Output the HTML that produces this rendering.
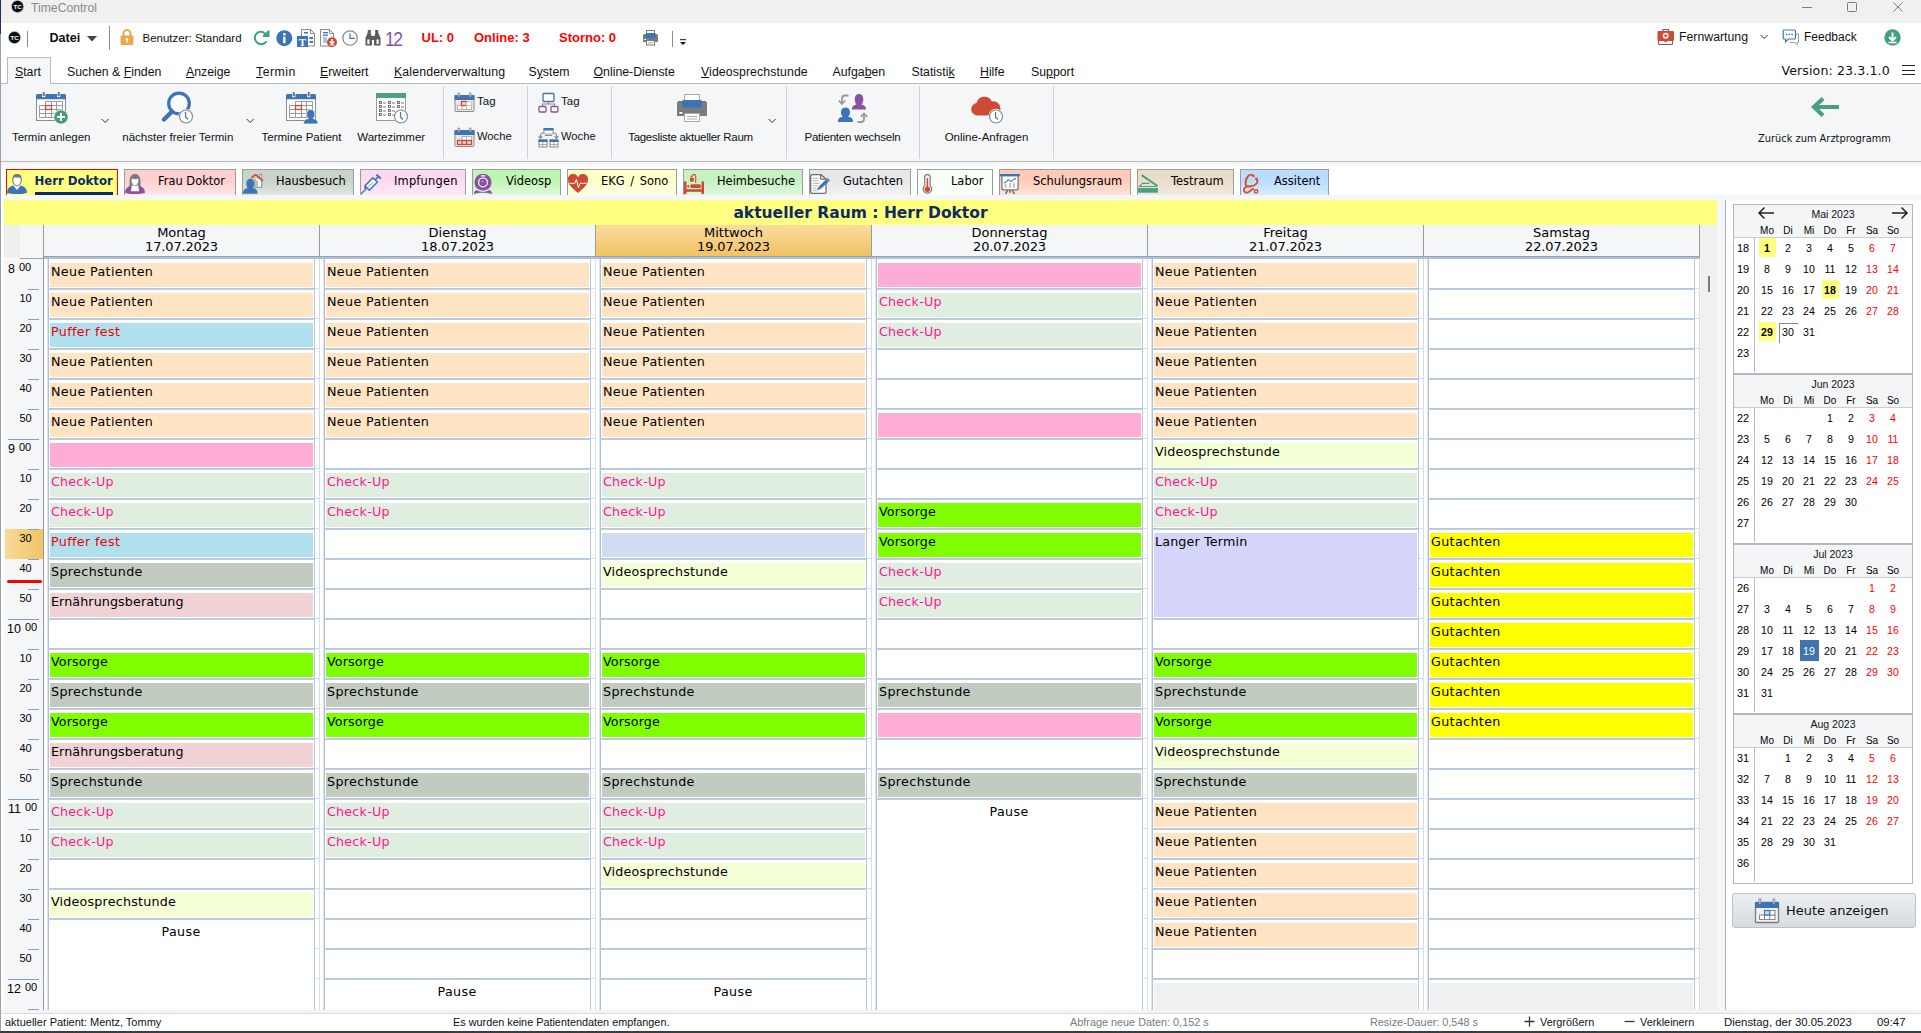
<!DOCTYPE html><html lang="de"><head><meta charset="utf-8"><title>TimeControl</title><style>
*{box-sizing:border-box;margin:0;padding:0}
html,body{width:1921px;height:1033px;overflow:hidden;background:#fff}
body{position:relative;font-family:"Liberation Sans",sans-serif;font-size:12px;color:#111}
.a{position:absolute}
.t{position:absolute;white-space:pre;line-height:1}
.dv{font-family:"DejaVu Sans","Liberation Sans",sans-serif}
.dvc{font-family:"DejaVu Sans Condensed","DejaVu Sans","Liberation Sans",sans-serif}
u{text-decoration:underline;text-underline-offset:1px}
.cell{position:absolute;font-family:"DejaVu Sans","Liberation Sans",sans-serif;font-size:12.7px;letter-spacing:.36px;line-height:15px;padding:1px 0 0 1px;white-space:pre;overflow:hidden;color:#000}
.hl{position:absolute;height:2px;background:linear-gradient(#b3c4da,#c3d0e2)}
.vl{position:absolute;width:1px;background:#b7c7dc}
.dh{position:absolute;top:225px;height:31px;background:#f5f6f8;border-right:1px solid #9a9a9a;font-family:"DejaVu Sans","Liberation Sans",sans-serif;font-size:13px;line-height:14px;text-align:center;padding-top:1px;color:#000}
.mc{position:absolute;font-size:10.6px;line-height:21px;text-align:center;width:21px;height:21px;color:#000}
  .rt{position:absolute;top:169px;height:26px;border:1px solid #9c9c9c;border-bottom:none;font-family:"DejaVu Sans","Liberation Sans",sans-serif;font-size:11.45px;line-height:14px;color:#000}
.rt span{position:absolute;top:4.4px;white-space:pre}
.rb{position:absolute;font-size:11.5px;white-space:pre;line-height:14px;text-align:center;color:#111}
.sep{position:absolute;top:86px;width:1px;height:73px;background:#cfd2d6}
.mi{position:absolute;top:65px;font-size:12.3px;line-height:15px;white-space:pre;color:#111}
</style></head><body>
<div class="a" style="left:0;top:0;width:1921px;height:23px;background:#f0f0f0"></div>
<div class="t" style="left:31px;top:1px;font-size:12.2px;line-height:14px;color:#8a8a8a">TimeControl</div>
<svg class="a" style="left:10.5px;top:0px" width="13" height="13" viewBox="0 0 13 13"><circle cx="6.5" cy="6.5" r="6.5" fill="#b8bcc4"/><circle cx="6.5" cy="6.5" r="5.7" fill="#0b0d14"/><text x="6.5" y="8.7" text-anchor="middle" font-family="Liberation Sans,sans-serif" font-weight="700" font-size="6.2" fill="#fff">TC</text></svg><svg class="a" style="left:1790px;top:0" width="131" height="23" viewBox="0 0 131 23" fill="none" stroke="#7d7d7d" stroke-width="1"><path d="M12 7.5h10"/><rect x="57.5" y="2.5" width="9" height="9" rx="1"/><path d="M103.500 2.500l9 9m0-9l-9 9"/></svg>
<svg class="a" style="left:7.5px;top:31px" width="13" height="13" viewBox="0 0 13 13"><circle cx="6.5" cy="6.5" r="6.5" fill="#b8bcc4"/><circle cx="6.5" cy="6.5" r="5.7" fill="#0b0d14"/><text x="6.5" y="8.7" text-anchor="middle" font-family="Liberation Sans,sans-serif" font-weight="700" font-size="6.2" fill="#fff">TC</text></svg><div class="a" style="left:27px;top:31px;width:1px;height:16px;background:#8c8c8c"></div><div class="t" style="left:49.5px;top:32px;font-size:12.6px;color:#111;font-weight:700;line-height:12px">Datei</div><svg class="a" style="left:87px;top:36px" width="10" height="6" viewBox="0 0 10 6"><path d="M0 0h10l-5 5.5z" fill="#444"/></svg><div class="a" style="left:109px;top:26px;width:1px;height:24px;background:#8c8c8c"></div><svg class="a" style="left:119px;top:28px" width="16" height="18" viewBox="0 0 16 18"><path d="M4.5 8V5.5a3.5 3.5 0 017 0V8" fill="none" stroke="#e9a94d" stroke-width="2"/><rect x="1.5" y="7.5" width="13" height="9.5" rx="1" fill="#e9a94d"/><circle cx="8" cy="11.3" r="1.2" fill="#fff"/><rect x="7.4" y="11.5" width="1.2" height="3" fill="#fff"/></svg><div class="t" style="left:142.5px;top:32px;font-size:11.5px;color:#111;line-height:12px">Benutzer: Standard</div><svg class="a" style="left:253px;top:30px" width="17" height="17" viewBox="0 0 17 17"><path d="M13.6 11.2A6 6 0 112.9 4.3 6 6 0 0112 3.6" fill="none" stroke="#439f7a" stroke-width="2"/><path d="M9.5 5.8l6-.3L15.200 .4z" fill="#439f7a"/><path d="M10 6h5.600V.6" fill="none" stroke="#439f7a" stroke-width="1.8"/></svg><svg class="a" style="left:275.5px;top:30px" width="17" height="17" viewBox="0 0 17 17"><circle cx="8.3" cy="8.2" r="8" fill="#3d74b7"/><circle cx="8.3" cy="4.3" r="1.3" fill="#fff"/><rect x="7.1" y="6.6" width="2.4" height="6.6" fill="#fff"/></svg><svg class="a" style="left:296px;top:28px" width="20" height="20" viewBox="0 0 20 20"><path d="M5.500 1.500h9l4 4v12.500h-13z" fill="#fff" stroke="#8a8a8a"/><path d="M14.500 1.500v4h4" fill="none" stroke="#8a8a8a"/><rect x="8" y="4" width="4" height="1.500" fill="#3d74b7"/><rect x="13.500" y="9" width="3.500" height="2" fill="#3d74b7"/><rect x="13.500" y="13" width="3.500" height="2" fill="#3d74b7"/><rect x="1" y="8" width="11" height="11" fill="#3d74b7"/><text x="6.500" y="17.500" text-anchor="middle" font-family="Liberation Serif,serif" font-weight="700" font-size="11" fill="#fff">T</text></svg><svg class="a" style="left:319px;top:28px" width="20" height="20" viewBox="0 0 20 20"><path d="M1.500 1.500h9l4 4v12.500h-13z" fill="#fff" stroke="#8a8a8a"/><path d="M10.500 1.500v4h4" fill="none" stroke="#8a8a8a"/><rect x="4" y="4" width="5" height="1.300" fill="#3d74b7"/><rect x="4" y="6.500" width="5" height="1.300" fill="#3d74b7"/><rect x="4" y="9" width="4" height="6" fill="#a9c6e6"/><circle cx="13" cy="14.300" r="5" fill="#cf4a34"/><path d="M13 11v4.500M10.800 13.600l2.200 2.200 2.200-2.200" fill="none" stroke="#fff" stroke-width="1.500"/><path d="M10.700 17h4.600" stroke="#fff" stroke-width="1"/></svg><svg class="a" style="left:342px;top:30px" width="16" height="16" viewBox="0 0 16 16"><circle cx="8.0" cy="8.0" r="7.2" fill="#fff" stroke="#8a8a8a" stroke-width="1.300"/><path d="M8.0 3.6V8.3H12.8" fill="none" stroke="#3d74b7" stroke-width="1.200"/></svg><svg class="a" style="left:364px;top:29px" width="18" height="18" viewBox="0 0 18 18"><path d="M1.500 16.500V9l2.500-6h2.500l1.500 6v7.500zM10 16.500V9l1.500-6H14l2.500 6v7.500z" fill="#5c5c5c"/><rect x="7" y="7" width="4" height="4" fill="#5c5c5c"/><rect x="3.800" y="1" width="3" height="2.500" fill="#5c5c5c"/><rect x="11.200" y="1" width="3" height="2.500" fill="#5c5c5c"/><rect x="3.300" y="10.500" width="2.200" height="4.500" fill="#fff"/><rect x="12.500" y="10.500" width="2.200" height="4.500" fill="#fff"/></svg><div class="t" style="left:385px;top:28px;font-size:21px;color:#8a50a8;line-height:21px;letter-spacing:-2px;transform:scaleX(.84);transform-origin:0 0">12</div><div class="t" style="left:421.5px;top:31px;font-size:13px;color:#f00;font-weight:700;line-height:13px">UL: 0</div><div class="t" style="left:474px;top:31px;font-size:13px;color:#f00;font-weight:700;line-height:13px">Online: 3</div><div class="t" style="left:559px;top:31px;font-size:13px;color:#f00;font-weight:700;line-height:13px">Storno: 0</div><svg class="a" style="left:642px;top:29px" width="18" height="18" viewBox="0 0 18 18"><rect x="4.500" y="1.500" width="8" height="4" fill="#fff" stroke="#7b7b7b"/><path d="M1 6.500a1.500 1.500 0 011.500-1.500h12a1.500 1.500 0 011.500 1.500V13H1z" fill="#7b7b7b"/><rect x="3.700" y="4" width="10" height="5" rx="1" fill="#3d74b7"/><rect x="4.500" y="11.500" width="8" height="4.500" fill="#fff" stroke="#7b7b7b"/><path d="M6 13.800h5" stroke="#a9a9a9"/><rect x="2.200" y="10" width="1.800" height="1" fill="#fff"/></svg><div class="a" style="left:672px;top:31px;width:1px;height:16px;background:#8c8c8c"></div><svg class="a" style="left:679px;top:38px" width="8" height="8" viewBox="0 0 8 8"><path d="M1 1.7h6" stroke="#111" stroke-width="1"/><path d="M1 4h6l-3 3z" fill="#111"/></svg><svg class="a" style="left:1656px;top:27px" width="20" height="20" viewBox="0 0 20 20"><path d="M7 4.500V2.500h5.500v2" fill="none" stroke="#666" stroke-width="1.200"/><rect x="2.500" y="12" width="14" height="5.500" rx="1" fill="#fff" stroke="#666" stroke-width="1.100"/><rect x="1.500" y="4" width="16.500" height="10" rx="1.300" fill="#cf4a34"/><circle cx="9.700" cy="8.700" r="3" fill="#fff"/><path d="M9.700 6.900v3.600M7.900 8.700h3.600" stroke="#cf4a34" stroke-width="1.200"/><path d="M8 14l1.700 1.800 1.700-1.800z" fill="#cf4a34"/></svg><div class="t" style="left:1679px;top:31px;font-size:12.3px;color:#111;line-height:12px">Fernwartung</div><svg class="a" style="left:1760px;top:33.5px" width="9" height="6" viewBox="0 0 9 6"><path d="M.7 1l3.5 3.5L7.7 1" fill="none" stroke="#333" stroke-width="1"/></svg><svg class="a" style="left:1782px;top:28px" width="20" height="20" viewBox="0 0 20 20"><path d="M12 6h4.500v8.500h-1.300v2.300l-2.700-2.300H8" fill="#fff" stroke="#9a9a9a" stroke-width="1"/><path d="M2.200 2h10.300a1 1 0 011 1v7a1 1 0 01-1 1H6.500l-3 2.800V11H2.200a1 1 0 01-1-1V3a1 1 0 011-1z" fill="#fff" stroke="#3d74b7" stroke-width="1.200"/><circle cx="4.700" cy="6.300" r=".85" fill="#3d74b7"/><circle cx="7.400" cy="6.300" r=".85" fill="#3d74b7"/><circle cx="10.100" cy="6.300" r=".85" fill="#3d74b7"/></svg><div class="t" style="left:1804px;top:31px;font-size:12px;color:#111;line-height:12px">Feedback</div><svg class="a" style="left:1883.5px;top:28.5px" width="18" height="18" viewBox="0 0 18 18"><circle cx="8.500" cy="8.500" r="8.200" fill="#439f7a"/><path d="M8.500 3.500v7M5 8l3.500 3.500L12 8" fill="none" stroke="#fff" stroke-width="2"/><path d="M4.500 13.500h8" stroke="#fff" stroke-width="1.600"/></svg>
<div class="a" style="left:7px;top:57px;width:44px;height:27px;background:#f5f6f8;border:1px solid #b9babc;border-bottom:none"></div><div class="mi" style="left:15px"><u>S</u>tart</div><div class="mi" style="left:67px">Suchen &amp; <u>F</u>inden</div><div class="mi" style="left:186px"><u>A</u>nzeige</div><div class="mi" style="left:256px"><span style="letter-spacing:.5px"><u>T</u>ermin</span></div><div class="mi" style="left:320px"><u>E</u>rweitert</div><div class="mi" style="left:394px"><span style="letter-spacing:.14px"><u>K</u>alenderverwaltung</span></div><div class="mi" style="left:528.5px">S<u>y</u>stem</div><div class="mi" style="left:593.5px"><u>O</u>nline-Dienste</div><div class="mi" style="left:701px"><span style="letter-spacing:.1px"><u>V</u>ideosprechstunde</span></div><div class="mi" style="left:832.5px">Aufga<u>b</u>en</div><div class="mi" style="left:911.5px">Statisti<u>k</u></div><div class="mi" style="left:980px"><u>H</u>ilfe</div><div class="mi" style="left:1031px">Su<u>p</u>port</div><div class="t dv" style="left:1781.5px;top:64px;font-size:12.6px;letter-spacing:.1px;line-height:14px;color:#111">Version: 23.3.1.0</div><div class="a" style="left:1902px;top:65px;width:13px;height:10px;border-top:1px solid #222;border-bottom:1px solid #222"><div style="margin-top:3.5px;height:1px;background:#222"></div></div>
<div class="a" style="left:1px;top:83px;width:1920px;height:1px;background:#b9babc"></div>
<div class="a" style="left:8px;top:83px;width:42px;height:1px;background:#f5f6f8"></div>
<div class="a" style="left:1px;top:84px;width:1920px;height:77px;background:#f5f6f8"></div>
<div class="a" style="left:1px;top:161px;width:1920px;height:1px;background:#b9babc"></div>
<div class="a" style="left:1px;top:162px;width:1920px;height:3px;background:#f5f6f8"></div>
<div class="sep" style="left:443px"></div><div class="sep" style="left:527px"></div><div class="sep" style="left:611px"></div><div class="sep" style="left:786px"></div><div class="sep" style="left:919px"></div><div class="sep" style="left:1053px"></div><svg class="a" style="left:35px;top:90px" width="36" height="36" viewBox="0 0 36 36"><rect x="1.5" y="5.5" width="29" height="25" fill="#fff" stroke="#8c8c8c"/><path d="M1 9.300V5.500A1.500 1.500 0 012.500 4h27A1.500 1.500 0 0131 5.500v3.800z" fill="#3d74b7"/><rect x="7" y="2" width="3.400" height="5.200" fill="#f5f6f8"/><rect x="22" y="2" width="3.400" height="5.200" fill="#f5f6f8"/><rect x="7.700" y="2" width="2" height="4.200" fill="#777"/><rect x="22.700" y="2" width="2" height="4.200" fill="#777"/><path d="M10.500 11.500h17v16h-23v-12h6zM4.500 19.500h23M4.500 23.500h23M10.500 15.500h17M10.500 11.500v16M16.500 11.500v16M21.500 11.500v16" fill="none" stroke="#9c9c9c"/><rect x="10.500" y="15.500" width="6" height="4" fill="#fbe9e5" stroke="#cf4a34" stroke-width="1.200"/><circle cx="26" cy="27" r="7.500" fill="#f5f6f8"/><circle cx="26" cy="27" r="6.800" fill="#439f7a"/><path d="M26 23v8M22 27h8" stroke="#fff" stroke-width="2"/></svg><div class="rb" style="left:-18.799999999999997px;top:130px;width:140px">Termin anlegen</div><svg class="a" style="left:101px;top:118px" width="9" height="6" viewBox="0 0 9 6"><path d="M.7 1l3.5 3.5L7.7 1" fill="none" stroke="#333" stroke-width="1"/></svg><svg class="a" style="left:160px;top:91px" width="36" height="34" viewBox="0 0 36 34"><circle cx="19" cy="12.500" r="10.300" fill="#fdfdfe" stroke="#3d74b7" stroke-width="3.200"/><path d="M12 20.500L4 28.500" stroke="#3d74b7" stroke-width="4.500" stroke-linecap="round"/><circle cx="26" cy="25.500" r="7.500" fill="#f5f6f8"/><circle cx="26" cy="25.500" r="6.500" fill="#fff" stroke="#8a8a8a" stroke-width="1.200"/><path d="M25.500 21v5l2.500 2.500" fill="none" stroke="#3d74b7" stroke-width="1.200"/></svg><div class="rb" style="left:107.80000000000001px;top:130px;width:140px">nächster freier Termin</div><svg class="a" style="left:246px;top:118px" width="9" height="6" viewBox="0 0 9 6"><path d="M.7 1l3.5 3.5L7.7 1" fill="none" stroke="#333" stroke-width="1"/></svg><svg class="a" style="left:285px;top:90px" width="36" height="36" viewBox="0 0 36 36"><rect x="1.5" y="5.5" width="29" height="25" fill="#fff" stroke="#8c8c8c"/><path d="M1 9.300V5.500A1.500 1.500 0 012.500 4h27A1.500 1.500 0 0131 5.500v3.800z" fill="#3d74b7"/><rect x="7" y="2" width="3.400" height="5.200" fill="#f5f6f8"/><rect x="22" y="2" width="3.400" height="5.200" fill="#f5f6f8"/><rect x="7.700" y="2" width="2" height="4.200" fill="#777"/><rect x="22.700" y="2" width="2" height="4.200" fill="#777"/><path d="M10.500 11.500h17v16h-23v-12h6zM4.500 19.500h23M4.500 23.500h23M10.500 15.500h17M10.500 11.500v16M16.500 11.500v16M21.500 11.500v16" fill="none" stroke="#9c9c9c"/><rect x="10.500" y="15.500" width="6" height="4" fill="#fbe9e5" stroke="#cf4a34" stroke-width="1.200"/><path d="M18.500 34c0-4 2-5 5-5.500-1.500-1-2-2.500-2-4.500 0-2.500 1.500-4.500 4.200-4.500s4.200 2 4.200 4.500c0 2-.5 3.500-2 4.500 3 .5 5 1.500 5 5.500z" fill="#3d74b7" stroke="#f5f6f8" stroke-width=".8"/></svg><div class="rb" style="left:231.5px;top:130px;width:140px">Termine Patient</div><svg class="a" style="left:375px;top:92px" width="34" height="34" viewBox="0 0 34 34"><rect x="1.500" y="1.500" width="29" height="27" fill="#fff" stroke="#9c9c9c"/><rect x="1" y="1" width="30" height="5" fill="#4fa17e"/><rect x="4.5" y="9.5" width="2" height="2" fill="none" stroke="#666" stroke-width=".9"/><path d="M8.0 11.0h3" stroke="#666" stroke-width=".9"/><rect x="13.5" y="9.5" width="2" height="2" fill="none" stroke="#666" stroke-width=".9"/><path d="M17.0 11.0h3" stroke="#666" stroke-width=".9"/><rect x="22.5" y="9.5" width="2" height="2" fill="none" stroke="#666" stroke-width=".9"/><path d="M26.0 11.0h3" stroke="#666" stroke-width=".9"/><rect x="4.5" y="13.5" width="2" height="2" fill="none" stroke="#666" stroke-width=".9"/><path d="M8.0 15.0h3" stroke="#666" stroke-width=".9"/><rect x="13.5" y="13.5" width="2" height="2" fill="none" stroke="#666" stroke-width=".9"/><path d="M17.0 15.0h3" stroke="#666" stroke-width=".9"/><rect x="22.5" y="13.5" width="2" height="2" fill="none" stroke="#666" stroke-width=".9"/><path d="M26.0 15.0h3" stroke="#666" stroke-width=".9"/><rect x="4.5" y="17.5" width="2" height="2" fill="none" stroke="#666" stroke-width=".9"/><path d="M8.0 19.0h3" stroke="#666" stroke-width=".9"/><rect x="13.5" y="17.5" width="2" height="2" fill="none" stroke="#666" stroke-width=".9"/><path d="M17.0 19.0h3" stroke="#666" stroke-width=".9"/><rect x="4.5" y="21.5" width="2" height="2" fill="none" stroke="#666" stroke-width=".9"/><path d="M8.0 23.0h3" stroke="#666" stroke-width=".9"/><rect x="13.5" y="21.5" width="2" height="2" fill="none" stroke="#666" stroke-width=".9"/><path d="M17.0 23.0h3" stroke="#666" stroke-width=".9"/><circle cx="26" cy="24.500" r="7.500" fill="#f5f6f8"/><circle cx="26" cy="24.500" r="6.500" fill="#fff" stroke="#8a8a8a" stroke-width="1.200"/><path d="M25.500 20v5l2.500 2.500" fill="none" stroke="#3d74b7" stroke-width="1.200"/></svg><div class="rb" style="left:321.2px;top:130px;width:140px">Wartezimmer</div><svg class="a" style="left:454px;top:92px" width="21" height="21" viewBox="0 0 21 21"><rect x="1" y="3.500" width="19" height="16" rx="1" fill="#e6e6e6" stroke="#8c8c8c"/><rect x=".5" y="3" width="20" height="5" fill="#3d74b7"/><rect x="4" y="1" width="1.500" height="4" fill="#e0e0e0" stroke="#777" stroke-width=".6"/><rect x="15.500" y="1" width="1.500" height="4" fill="#e0e0e0" stroke="#777" stroke-width=".6"/><rect x="3.500" y="13.500" width="14" height="4" fill="#fff" stroke="#b5b5b5"/><path d="M8 13.500v4M12.500 13.500v4" stroke="#b5b5b5"/><rect x="7.500" y="9.500" width="5" height="4" fill="#f6d5cf" stroke="#cf4a34" stroke-width="1.300"/><rect x="12.500" y="10" width="5" height="3.500" fill="#fff" stroke="#c5c5c5" stroke-width=".8"/></svg><div class="t" style="left:477px;top:95px;font-size:11.5px;color:#111;line-height:12px">Tag</div><svg class="a" style="left:454px;top:127px" width="21" height="21" viewBox="0 0 21 21"><rect x="1" y="3.500" width="19" height="16" rx="1" fill="#e6e6e6" stroke="#8c8c8c"/><rect x=".5" y="3" width="20" height="5" fill="#3d74b7"/><rect x="4" y="1" width="1.500" height="4" fill="#e0e0e0" stroke="#777" stroke-width=".6"/><rect x="15.500" y="1" width="1.500" height="4" fill="#e0e0e0" stroke="#777" stroke-width=".6"/><rect x="8" y="9.500" width="9.500" height="4" fill="#fff" stroke="#b5b5b5"/><path d="M12.500 9.500v4" stroke="#b5b5b5"/><rect x="3.500" y="13.500" width="14" height="4" fill="#f6d5cf" stroke="#cf4a34" stroke-width="1.300"/><path d="M8 13.500v4M12.500 13.500v4" stroke="#cf4a34" stroke-width="1.300"/></svg><div class="t" style="left:477px;top:130px;font-size:11.2px;color:#111;line-height:12px">Woche</div><svg class="a" style="left:538px;top:92px" width="21" height="21" viewBox="0 0 21 21"><rect x="5" y="1.500" width="11" height="8" rx="1" fill="#fff" stroke="#3d74b7" stroke-width="1.300"/><path d="M10.500 9.500v2.500M4.500 15v-3h12v3" fill="none" stroke="#888" stroke-width="1.100"/><rect x="1" y="14.500" width="7" height="5.500" rx="1" fill="#fff" stroke="#8c4fa6" stroke-width="1.300"/><rect x="13" y="14.500" width="7" height="5.500" rx="1" fill="#fff" stroke="#8c4fa6" stroke-width="1.300"/></svg><div class="t" style="left:561px;top:95px;font-size:11.5px;color:#111;line-height:12px">Tag</div><svg class="a" style="left:538px;top:127px" width="21" height="21" viewBox="0 0 21 21"><rect x="6" y="1.500" width="9" height="5.500" fill="#fff" stroke="#999" stroke-width=".9"/><rect x="5.500" y="1" width="10" height="2.500" fill="#3d74b7"/><path d="M6 5.500C2.500 6 2 8.500 2.500 11M15 5.500c3.500.5 4 3 3.500 5.500" fill="none" stroke="#888" stroke-width="1.100"/><path d="M.5 9l2 2.500 2-2.500M16.500 9l2 2.500 2-2.500" fill="none" stroke="#888" stroke-width="1.100"/><path d="M7 8.500h7" stroke="#888" stroke-width="1"/><rect x="1" y="13" width="8" height="7" fill="#fff" stroke="#888" stroke-width="1"/><rect x="0.5" y="12.5" width="9" height="2.500" fill="#3d74b7"/><path d="M5 15v5M1 17.5h8" stroke="#999" stroke-width=".8"/><rect x="12" y="13" width="8" height="7" fill="#fff" stroke="#888" stroke-width="1"/><rect x="11.5" y="12.5" width="9" height="2.500" fill="#3d74b7"/><path d="M16 15v5M12 17.5h8" stroke="#999" stroke-width=".8"/></svg><div class="t" style="left:561px;top:130px;font-size:11.2px;color:#111;line-height:12px">Woche</div><svg class="a" style="left:676px;top:92px" width="32" height="31" viewBox="0 0 32 31"><rect x="8.5" y="2.5" width="15" height="8" fill="#fff" stroke="#a9a9a9"/><path d="M1 11a2 2 0 012-2h26a2 2 0 012 2v13H1z" fill="#7b7b7b"/><rect x="6" y="8" width="20" height="7.5" rx="1.5" fill="#3d74b7"/><rect x="8.5" y="21.5" width="15" height="8" fill="#fff" stroke="#a9a9a9"/><path d="M11 24.500h10M11 27h10" stroke="#a9a9a9"/><rect x="3.300" y="20" width="3" height="1.800" fill="#fff"/></svg><div class="rb" style="left:610.5px;top:130px;width:160px"><span style="letter-spacing:-.28px">Tagesliste aktueller Raum</span></div><svg class="a" style="left:768px;top:118px" width="9" height="6" viewBox="0 0 9 6"><path d="M.7 1l3.5 3.5L7.7 1" fill="none" stroke="#333" stroke-width="1"/></svg><svg class="a" style="left:837px;top:92px" width="34" height="32" viewBox="0 0 34 32"><path d="M1 30c0-4 2-4.800 5-5.300-1.300-1-2-2.500-2-4.500 0-2.800 1.700-4.700 4.500-4.700s4.500 1.900 4.500 4.700c0 2-.7 3.500-2 4.500 3 .5 5 1.300 5 5.300z" fill="#3d74b7"/><path d="M15 17.500c0-3.500 2-4.500 4.500-5-1.200-1.200-1.800-3.500-1.800-5.500 0-3 1.600-5 4.300-5s4.300 2 4.300 5c0 2-.6 4.300-1.800 5.500 2.500.5 4.500 1.500 4.500 5z" fill="#8c4fa6"/><path d="M11.500 3.500H8a3 3 0 00-3 3V11" fill="none" stroke="#999" stroke-width="1.800"/><path d="M1.800 8.500L5 12l3.200-3.500" fill="none" stroke="#999" stroke-width="1.800"/><path d="M20.500 30H24a3 3 0 003-3v-4.500" fill="none" stroke="#999" stroke-width="1.800"/><path d="M23.800 25L27 21.500l3.200 3.500" fill="none" stroke="#999" stroke-width="1.800"/></svg><div class="rb" style="left:782.5px;top:130px;width:140px"><span style="letter-spacing:-.2px">Patienten wechseln</span></div><svg class="a" style="left:970px;top:94px" width="36" height="32" viewBox="0 0 36 32"><path d="M7 21.500a6.300 6.300 0 01-.5-12.500 8.300 8.300 0 0115.500-1.500 7 7 0 018.500 7c0 4-3 7-6.500 7z" fill="#cf4a34"/><circle cx="26" cy="22.500" r="7.700" fill="#f5f6f8"/><circle cx="26" cy="22.500" r="6.500" fill="#fff" stroke="#8a8a8a" stroke-width="1.200"/><path d="M25.500 18v5l2.500 2.500" fill="none" stroke="#3d74b7" stroke-width="1.200"/></svg><div class="rb" style="left:916.5px;top:130px;width:140px">Online-Anfragen</div><svg class="a" style="left:1810px;top:96px" width="30" height="22" viewBox="0 0 30 22"><path d="M29 11H5M13 2.500L4 11l9 8.500" fill="none" stroke="#4a9f7c" stroke-width="4.200"/></svg><div class="t dvc" style="left:1758px;top:132px;font-size:10.95px;line-height:13px;color:#111">Zurück zum Arztprogramm</div>
<div class="rt" style="left:6px;width:112px;background:#ffff80;border-color:#f00;color:#0c2b63;font-weight:700;font-size:11.7px"><span style="left:27.5px">Herr Doktor</span><div class="a" style="left:28px;top:22px;width:78px;height:3px;background:#0c2b63"></div><svg class="a" style="left:0px;top:4px" width="20" height="20" viewBox="0 0 20 20"><path d="M0 18.700C.3 14.500 2 13 6.300 11.500h7.400c4.300 1.500 6 3 6.300 7.200-3.500 1.800-16.500 1.800-20 0z" fill="#3d74b7"/><path d="M6.300 11.400L10 16l3.700-4.600-1.700-1.400H8z" fill="#fff"/><path d="M5.700 6c0-3.300 1.600-5.500 4.300-5.500s4.300 2.200 4.300 5.500c0 3-1.800 5.700-4.300 5.700S5.700 9 5.700 6z" fill="#fdfdfd" stroke="#7b7b7b" stroke-width="1.100"/><path d="M5.300 5.500C5.300 2 7 0 10 0s4.700 2 4.700 5.500c-.8-1.800-2.500-2.300-4.700-1.800-2.200-.5-3.900 0-4.700 1.800z" fill="#7b7b7b"/></svg></div><div class="rt" style="left:124px;width:112px;background:linear-gradient(#ffcfcf 40%,#ffe6e6)"><span style="left:33px;">Frau Doktor</span><svg class="a" style="left:0px;top:4px" width="20" height="20" viewBox="0 0 20 20"><path d="M4.200 13C4.800 10 4.300 8 4.600 5.500 5 2 7 0 10 0s5 2 5.400 5.500c.3 2.500-.2 4.500.4 7.500z" fill="#7b7b7b"/><path d="M0 18.700C.3 14.500 2 13 6 11.700h8c4 1.300 5.700 2.800 6 7-3.500 1.800-16.500 1.800-20 0z" fill="#8c4fa6"/><path d="M5.800 17.200l1-5.800h6.400l1 5.800z" fill="#fff"/><path d="M6.300 6.500c0-1 .3-1.700.7-2.200 1.500.8 4.500.8 6 0 .4.500.7 1.200.7 2.200 0 2.700-1.700 5-3.700 5s-3.700-2.300-3.700-5z" fill="#fdfdfd" stroke="#7b7b7b" stroke-width=".5"/></svg></div><div class="rt" style="left:242px;width:112px;background:linear-gradient(#c9d3c9 40%,#dfe6df)"><span style="left:33px;">Hausbesuch</span><svg class="a" style="left:0px;top:4px" width="21" height="20" viewBox="0 0 21 20"><rect x="16.600" y=".5" width="2.200" height="4" fill="#e4e4e4" stroke="#8a8a8a" stroke-width=".8"/><path d="M12 4.500v8.700h6.700V6" fill="#fff" stroke="#8a8a8a" stroke-width="1.100"/><rect x="12.600" y="6.500" width="2.400" height="6.500" fill="#bdbdbd"/><path d="M8.500 3.700L12.600.6l7.300 6.300" fill="none" stroke="#cf4a34" stroke-width="1.800"/><path d="M0 19.800c0-4 1.500-5 4.800-5.800-1-1-1.400-2.500-1.400-4.500 0-2.800 1.500-4.700 3.900-4.700s3.900 1.900 3.900 4.700c0 2-.4 3.500-1.400 4.500 3.300.8 4.800 1.800 4.800 5.800z" fill="#3d74b7"/></svg></div><div class="rt" style="left:360px;width:106px;background:linear-gradient(#ffd9f1 40%,#ffe9f7)"><span style="left:33px;letter-spacing:.2px">Impfungen</span><svg class="a" style="left:0px;top:4px" width="21" height="21" viewBox="0 0 21 21"><path d="M0 20L5.300 14.800" stroke="#3d74b7" stroke-width="1.300"/><path d="M3.700 13L5 14.300" stroke="#3d74b7" stroke-width="2.400"/><path d="M3.900 11.900l7.900-8 4.600 4.100-8 8.200z" fill="#fff" stroke="#3d74b7" stroke-width="1.500" stroke-linejoin="round"/><path d="M14.300 5.700L17 3" stroke="#3d74b7" stroke-width="1.600"/><path d="M15.300.6l4.500 4" stroke="#3d74b7" stroke-width="2"/><path d="M7.500 12.600l1-1M9.200 10.900l1-1M10.900 9.200l1-1" stroke="#3d74b7" stroke-width="1"/></svg></div><div class="rt" style="left:472px;width:89px;background:linear-gradient(#bff5b2 40%,#dffad8)"><span style="left:33px;">Videosp</span><svg class="a" style="left:0px;top:4px" width="20" height="20" viewBox="0 0 20 20"><path d="M.9 20c-.2-1.500 1-3.300 2.700-4.100 3.500 2.300 9.300 2.300 12.800 0 1.700.8 2.900 2.600 2.700 4.100-5-1.600-13.200-1.600-18.200 0z" fill="#8c4fa6"/><circle cx="10" cy="8.300" r="8.500" fill="#8c4fa6"/><circle cx="10" cy="8.400" r="4.400" fill="none" stroke="#fff" stroke-width="1.200"/><circle cx="9.600" cy="7.600" r=".7" fill="#fff"/><rect x="7.800" y="1.300" width="4.500" height="1.100" rx=".5" fill="#fff"/><path d="M4.200 15.800c3.300 2 8.300 2 11.600 0" fill="none" stroke="#f0e6f5" stroke-width=".6"/></svg></div><div class="rt" style="left:567px;width:110px;background:linear-gradient(#ffffc9 40%,#ffffe2)"><span style="left:33px;word-spacing:2px">EKG / Sono</span><svg class="a" style="left:0px;top:4px" width="21" height="20" viewBox="0 0 21 20"><path d="M10 19C2.500 12.800.1 9.800.1 6.300A5.100 5.100 0 0110 3.600a5.100 5.100 0 019.900 2.700c0 3.500-2.400 6.500-9.900 12.700z" fill="#cf4a34"/><path d="M1.500 9.300h5.400l1.500-4 2 8.400 1.600-4.400h6.500" fill="none" stroke="#fff" stroke-width="1" stroke-linejoin="round"/></svg></div><div class="rt" style="left:683px;width:120px;background:linear-gradient(#c6f1c0 40%,#e0f7dc)"><span style="left:33px;">Heimbesuche</span><svg class="a" style="left:0px;top:4px" width="21" height="20" viewBox="0 0 21 20"><rect x="0" y="7.400" width="2.500" height="12.600" fill="#cf4a34"/><rect x="17.500" y="7.400" width="2.500" height="12.600" fill="#cf4a34"/><rect x="0" y="15.200" width="20" height="2.600" fill="#cf4a34"/><rect x="6.400" y="10.200" width="10.400" height="3.900" rx="1.200" fill="#cf4a34"/><ellipse cx="4.300" cy="12.300" rx="1" ry="1.400" fill="#cf4a34"/><path d="M11.700 9V2.500c0-2.500-2.200-2.500-3-1.300L7 3.500" fill="none" stroke="#cf4a34" stroke-width="1.100"/><path d="M6.300 2.100l1.500 1.200" stroke="#cf4a34" stroke-width=".9"/><rect x="6" y="3.800" width="3.800" height="4" rx="1" fill="#cf4a34"/></svg></div><div class="rt" style="left:809px;width:102px;background:linear-gradient(#e6e7e9 40%,#f2f2f4)"><span style="left:33px;">Gutachten</span><svg class="a" style="left:0px;top:4px" width="21" height="20" viewBox="0 0 21 20"><path d="M2 .7h9l5 4.300v13a1.300 1.300 0 01-1.300 1.300H2A1.300 1.300 0 01.7 18V2A1.300 1.300 0 012 .7z" fill="#fff" stroke="#6e6e6e" stroke-width="1.300"/><path d="M10.700 1v3.200a1 1 0 001 1h3.800" fill="none" stroke="#6e6e6e" stroke-width="1.300"/><path d="M2.800 4.300h5.700M2.800 6.800h5.700M2.800 9.300h7M2.800 11.800h5M2.800 14.300h3M2.800 16.700h4" stroke="#a8a8a8" stroke-width=".9"/><path d="M6.800 16.300l1.700-3.500 9-8.700 2.400 2.400-9.200 8.500z" fill="#3d74b7"/><path d="M16.300 5.300l2.300 2.400M9 12.400l2.200 2.300" stroke="#c9d6e8" stroke-width=".7"/></svg></div><div class="rt" style="left:917px;width:76px;background:linear-gradient(#f7fff7 40%,#fbfffb)"><span style="left:33px;">Labor</span><svg class="a" style="left:0px;top:4px" width="20" height="20" viewBox="0 0 20 20"><path d="M6.700 3.300a2.700 2.700 0 015.400 0v8.500a4.200 4.200 0 11-5.400 0z" fill="#fff" stroke="#808080" stroke-width="1.300"/><circle cx="9.400" cy="15.200" r="2.700" fill="#cf4a34"/><rect x="8.600" y="4" width="1.600" height="10" rx=".8" fill="#cf4a34"/></svg></div><div class="rt" style="left:999px;width:132px;background:linear-gradient(#ffcbb8 40%,#ffe3d8)"><span style="left:33px;">Schulungsraum</span><svg class="a" style="left:0px;top:4px" width="21" height="20" viewBox="0 0 21 20"><path d="M7.700 16l-2 4M12.300 16l2 4M10 16v2.700" stroke="#666" stroke-width="1.500"/><path d="M1.900 1.500v12.400a2 2 0 002 2h12.200a2 2 0 002-2V1.500z" fill="#fff" stroke="#777" stroke-width="1.300"/><rect x="0" y="0" width="20" height="2.200" rx=".5" fill="#3d74b7"/><path d="M5.500 13.700V10M10 13.700V9.300M13.800 13.700V8.800" stroke="#b9b9bd" stroke-width="1.800"/><path d="M4.200 9.300l4.400-3.700 2.200 2 4.600-3.100" fill="none" stroke="#439f7a" stroke-width="1.200"/><circle cx="15.200" cy="4.600" r=".9" fill="#439f7a"/></svg></div><div class="rt" style="left:1137px;width:97px;background:linear-gradient(#e9dcc9 40%,#f2eadf)"><span style="left:33px;">Testraum</span><svg class="a" style="left:0px;top:4px" width="21" height="20" viewBox="0 0 21 20"><rect x="0" y="14" width="20" height="4.700" fill="#4a9f7c"/><rect x="1.300" y="16" width="1.300" height="1" fill="#7fbfa3"/><path d="M3.700 1.200L19.500 12" stroke="#4a9f7c" stroke-width="2"/><path d="M11.400 9.400H4.500L1.300 12.500h18" fill="none" stroke="#4a9f7c" stroke-width="1.100"/></svg></div><div class="rt" style="left:1240px;width:89px;background:linear-gradient(#b9dcff 40%,#d8ebff)"><span style="left:33px;">Assitent</span><svg class="a" style="left:0px;top:4px" width="21" height="20" viewBox="0 0 21 20"><path d="M12.300 1.800C11 .4 9 .3 7.600 1.700 5.500 3.800 4.300 7 4.700 10.500c.2 1.200 1.200 2 2.600 2 1.500 0 3-.2 3.700-.6" fill="none" stroke="#d94a2b" stroke-width="1.800" stroke-linecap="round"/><path d="M15.400 4.900c1.200 1.300 1.300 3.100.3 4.400-.9 1.100-2 1.800-3.400 2.500" fill="none" stroke="#d94a2b" stroke-width="1.800" stroke-linecap="round"/><circle cx="12.400" cy="1.900" r="1.200" fill="#d94a2b"/><circle cx="15.300" cy="4.800" r="1.200" fill="#d94a2b"/><path d="M6 12.500c-2 .7-3.300 2-3.100 3.800.3 2 2.500 2.800 4.500 1.800 1.500-.8 2.500-2.200 4.900-3.200" fill="none" stroke="#d94a2b" stroke-width="1.800" stroke-linecap="round"/><circle cx="15.100" cy="17.400" r="1.700" fill="none" stroke="#d94a2b" stroke-width="1.400"/></svg></div>
<div class="a" style="left:4px;top:195px;width:1917px;height:5px;background:#f5f6f8"></div>
<div class="a dv" style="left:4px;top:200px;width:1713px;height:25px;background:#ffff80;text-align:center;font-weight:700;font-size:15.5px;line-height:26px;color:#0c2b63;white-space:pre">aktueller Raum : Herr Doktor</div>
<div class="a" style="left:1700px;top:225px;width:17px;height:785px;background:#f0f0f0"></div>
<div class="a" style="left:1717px;top:195px;width:8px;height:815px;background:#f5f6f8"></div>
<div class="a" style="left:1725px;top:200px;width:1px;height:810px;background:#b4b4b4"></div>
<div class="a" style="left:1708px;top:276px;width:2px;height:16px;background:#7a7a7a"></div>
<div class="a" style="left:4px;top:225px;width:16px;height:33px;background:#efefef"></div>
<div class="a" style="left:20px;top:225px;width:23px;height:34px;background:#f5f6f8;border-bottom:1px solid #a0a0a0"></div>
<div class="a" style="left:43px;top:225px;width:1px;height:785px;background:#9a9a9a"></div>
<div class="a" style="left:4px;top:259px;width:39px;height:751px;background:#f5f6f8"></div>
<div class="dh" style="left:44px;width:276px;">Montag<br><span style="letter-spacing:-.15px">17.07.2023</span></div>
<div class="dh" style="left:320px;width:276px;">Dienstag<br><span style="letter-spacing:-.15px">18.07.2023</span></div>
<div class="dh" style="left:596px;width:276px;background:linear-gradient(#fbdca0,#f2c262);">Mittwoch<br><span style="letter-spacing:-.15px">19.07.2023</span></div>
<div class="dh" style="left:872px;width:276px;">Donnerstag<br><span style="letter-spacing:-.15px">20.07.2023</span></div>
<div class="dh" style="left:1148px;width:276px;">Freitag<br><span style="letter-spacing:-.15px">21.07.2023</span></div>
<div class="dh" style="left:1424px;width:276px;">Samstag<br><span style="letter-spacing:-.15px">22.07.2023</span></div>
<div class="a" style="left:44px;top:256px;width:1656px;height:1px;background:#a0a0a0"></div>
<div class="a" style="left:44px;top:257px;width:1656px;height:2px;background:#a9c1e3"></div>
<div class="a" style="left:47px;top:259px;width:1px;height:751px;background:#dbe4f1"></div>
<div class="a" style="left:48px;top:259px;width:1px;height:751px;background:#aebfd6"></div>
<div class="vl" style="left:314px;top:259px;height:751px"></div>
<div class="a" style="left:319px;top:259px;width:1px;height:751px;background:#d3def0"></div>
<div class="cell" style="left:50px;top:263px;width:263px;height:24px;background:#ffe4c4;color:#000;">Neue Patienten</div>
<div class="hl" style="left:48px;top:288px;width:267px"></div>
<div class="a" style="left:315px;top:288px;width:4px;height:1px;background:#d3def0"></div>
<div class="cell" style="left:50px;top:293px;width:263px;height:24px;background:#ffe4c4;color:#000;">Neue Patienten</div>
<div class="hl" style="left:48px;top:318px;width:267px"></div>
<div class="a" style="left:315px;top:318px;width:4px;height:1px;background:#d3def0"></div>
<div class="cell" style="left:50px;top:323px;width:263px;height:24px;background:#b0dfee;color:#f00000;">Puffer fest</div>
<div class="hl" style="left:48px;top:348px;width:267px"></div>
<div class="a" style="left:315px;top:348px;width:4px;height:1px;background:#d3def0"></div>
<div class="cell" style="left:50px;top:353px;width:263px;height:24px;background:#ffe4c4;color:#000;">Neue Patienten</div>
<div class="hl" style="left:48px;top:378px;width:267px"></div>
<div class="a" style="left:315px;top:378px;width:4px;height:1px;background:#d3def0"></div>
<div class="cell" style="left:50px;top:383px;width:263px;height:24px;background:#ffe4c4;color:#000;">Neue Patienten</div>
<div class="hl" style="left:48px;top:408px;width:267px"></div>
<div class="a" style="left:315px;top:408px;width:4px;height:1px;background:#d3def0"></div>
<div class="cell" style="left:50px;top:413px;width:263px;height:24px;background:#ffe4c4;color:#000;">Neue Patienten</div>
<div class="hl" style="left:48px;top:438px;width:267px"></div>
<div class="a" style="left:315px;top:438px;width:4px;height:1px;background:#d3def0"></div>
<div class="cell" style="left:50px;top:443px;width:263px;height:24px;background:#ffacd6;color:#000;"></div>
<div class="hl" style="left:48px;top:468px;width:267px"></div>
<div class="a" style="left:315px;top:468px;width:4px;height:1px;background:#d3def0"></div>
<div class="cell" style="left:50px;top:473px;width:263px;height:24px;background:#e0eee0;color:#ff1493;letter-spacing:.22px;">Check-Up</div>
<div class="hl" style="left:48px;top:498px;width:267px"></div>
<div class="a" style="left:315px;top:498px;width:4px;height:1px;background:#d3def0"></div>
<div class="cell" style="left:50px;top:503px;width:263px;height:24px;background:#e0eee0;color:#ff1493;letter-spacing:.22px;">Check-Up</div>
<div class="hl" style="left:48px;top:528px;width:267px"></div>
<div class="a" style="left:315px;top:528px;width:4px;height:1px;background:#d3def0"></div>
<div class="cell" style="left:50px;top:533px;width:263px;height:24px;background:#b0dfee;color:#f00000;">Puffer fest</div>
<div class="hl" style="left:48px;top:558px;width:267px"></div>
<div class="a" style="left:315px;top:558px;width:4px;height:1px;background:#d3def0"></div>
<div class="cell" style="left:50px;top:563px;width:263px;height:24px;background:#c1cbc0;color:#000;">Sprechstunde</div>
<div class="hl" style="left:48px;top:588px;width:267px"></div>
<div class="a" style="left:315px;top:588px;width:4px;height:1px;background:#d3def0"></div>
<div class="cell" style="left:50px;top:593px;width:263px;height:24px;background:#f0d2d5;color:#000;letter-spacing:.1px;">Ernährungsberatung</div>
<div class="hl" style="left:48px;top:618px;width:267px"></div>
<div class="a" style="left:315px;top:618px;width:4px;height:1px;background:#d3def0"></div>
<div class="hl" style="left:48px;top:648px;width:267px"></div>
<div class="a" style="left:315px;top:648px;width:4px;height:1px;background:#d3def0"></div>
<div class="cell" style="left:50px;top:653px;width:263px;height:24px;background:#80ff00;color:#000;letter-spacing:.12px;">Vorsorge</div>
<div class="hl" style="left:48px;top:678px;width:267px"></div>
<div class="a" style="left:315px;top:678px;width:4px;height:1px;background:#d3def0"></div>
<div class="cell" style="left:50px;top:683px;width:263px;height:24px;background:#c1cbc0;color:#000;">Sprechstunde</div>
<div class="hl" style="left:48px;top:708px;width:267px"></div>
<div class="a" style="left:315px;top:708px;width:4px;height:1px;background:#d3def0"></div>
<div class="cell" style="left:50px;top:713px;width:263px;height:24px;background:#80ff00;color:#000;letter-spacing:.12px;">Vorsorge</div>
<div class="hl" style="left:48px;top:738px;width:267px"></div>
<div class="a" style="left:315px;top:738px;width:4px;height:1px;background:#d3def0"></div>
<div class="cell" style="left:50px;top:743px;width:263px;height:24px;background:#f0d2d5;color:#000;letter-spacing:.1px;">Ernährungsberatung</div>
<div class="hl" style="left:48px;top:768px;width:267px"></div>
<div class="a" style="left:315px;top:768px;width:4px;height:1px;background:#d3def0"></div>
<div class="cell" style="left:50px;top:773px;width:263px;height:24px;background:#c1cbc0;color:#000;">Sprechstunde</div>
<div class="hl" style="left:48px;top:798px;width:267px"></div>
<div class="a" style="left:315px;top:798px;width:4px;height:1px;background:#d3def0"></div>
<div class="cell" style="left:50px;top:803px;width:263px;height:24px;background:#e0eee0;color:#ff1493;letter-spacing:.22px;">Check-Up</div>
<div class="hl" style="left:48px;top:828px;width:267px"></div>
<div class="a" style="left:315px;top:828px;width:4px;height:1px;background:#d3def0"></div>
<div class="cell" style="left:50px;top:833px;width:263px;height:24px;background:#e0eee0;color:#ff1493;letter-spacing:.22px;">Check-Up</div>
<div class="hl" style="left:48px;top:858px;width:267px"></div>
<div class="a" style="left:315px;top:858px;width:4px;height:1px;background:#d3def0"></div>
<div class="hl" style="left:48px;top:888px;width:267px"></div>
<div class="a" style="left:315px;top:888px;width:4px;height:1px;background:#d3def0"></div>
<div class="cell" style="left:50px;top:893px;width:263px;height:24px;background:#f5ffd6;color:#000;letter-spacing:.2px;">Videosprechstunde</div>
<div class="hl" style="left:48px;top:918px;width:267px"></div>
<div class="a" style="left:315px;top:918px;width:4px;height:1px;background:#d3def0"></div>
<div class="a" style="left:315px;top:948px;width:4px;height:1px;background:#d3def0"></div>
<div class="a" style="left:315px;top:978px;width:4px;height:1px;background:#d3def0"></div>
<div class="cell" style="left:50px;top:923px;width:261px;height:20px;text-align:center">Pause</div>
<div class="a" style="left:323px;top:259px;width:1px;height:751px;background:#dbe4f1"></div>
<div class="a" style="left:324px;top:259px;width:1px;height:751px;background:#aebfd6"></div>
<div class="vl" style="left:590px;top:259px;height:751px"></div>
<div class="a" style="left:595px;top:259px;width:1px;height:751px;background:#d3def0"></div>
<div class="cell" style="left:326px;top:263px;width:263px;height:24px;background:#ffe4c4;color:#000;">Neue Patienten</div>
<div class="hl" style="left:324px;top:288px;width:267px"></div>
<div class="a" style="left:591px;top:288px;width:4px;height:1px;background:#d3def0"></div>
<div class="cell" style="left:326px;top:293px;width:263px;height:24px;background:#ffe4c4;color:#000;">Neue Patienten</div>
<div class="hl" style="left:324px;top:318px;width:267px"></div>
<div class="a" style="left:591px;top:318px;width:4px;height:1px;background:#d3def0"></div>
<div class="cell" style="left:326px;top:323px;width:263px;height:24px;background:#ffe4c4;color:#000;">Neue Patienten</div>
<div class="hl" style="left:324px;top:348px;width:267px"></div>
<div class="a" style="left:591px;top:348px;width:4px;height:1px;background:#d3def0"></div>
<div class="cell" style="left:326px;top:353px;width:263px;height:24px;background:#ffe4c4;color:#000;">Neue Patienten</div>
<div class="hl" style="left:324px;top:378px;width:267px"></div>
<div class="a" style="left:591px;top:378px;width:4px;height:1px;background:#d3def0"></div>
<div class="cell" style="left:326px;top:383px;width:263px;height:24px;background:#ffe4c4;color:#000;">Neue Patienten</div>
<div class="hl" style="left:324px;top:408px;width:267px"></div>
<div class="a" style="left:591px;top:408px;width:4px;height:1px;background:#d3def0"></div>
<div class="cell" style="left:326px;top:413px;width:263px;height:24px;background:#ffe4c4;color:#000;">Neue Patienten</div>
<div class="hl" style="left:324px;top:438px;width:267px"></div>
<div class="a" style="left:591px;top:438px;width:4px;height:1px;background:#d3def0"></div>
<div class="hl" style="left:324px;top:468px;width:267px"></div>
<div class="a" style="left:591px;top:468px;width:4px;height:1px;background:#d3def0"></div>
<div class="cell" style="left:326px;top:473px;width:263px;height:24px;background:#e0eee0;color:#ff1493;letter-spacing:.22px;">Check-Up</div>
<div class="hl" style="left:324px;top:498px;width:267px"></div>
<div class="a" style="left:591px;top:498px;width:4px;height:1px;background:#d3def0"></div>
<div class="cell" style="left:326px;top:503px;width:263px;height:24px;background:#e0eee0;color:#ff1493;letter-spacing:.22px;">Check-Up</div>
<div class="hl" style="left:324px;top:528px;width:267px"></div>
<div class="a" style="left:591px;top:528px;width:4px;height:1px;background:#d3def0"></div>
<div class="hl" style="left:324px;top:558px;width:267px"></div>
<div class="a" style="left:591px;top:558px;width:4px;height:1px;background:#d3def0"></div>
<div class="hl" style="left:324px;top:588px;width:267px"></div>
<div class="a" style="left:591px;top:588px;width:4px;height:1px;background:#d3def0"></div>
<div class="hl" style="left:324px;top:618px;width:267px"></div>
<div class="a" style="left:591px;top:618px;width:4px;height:1px;background:#d3def0"></div>
<div class="hl" style="left:324px;top:648px;width:267px"></div>
<div class="a" style="left:591px;top:648px;width:4px;height:1px;background:#d3def0"></div>
<div class="cell" style="left:326px;top:653px;width:263px;height:24px;background:#80ff00;color:#000;letter-spacing:.12px;">Vorsorge</div>
<div class="hl" style="left:324px;top:678px;width:267px"></div>
<div class="a" style="left:591px;top:678px;width:4px;height:1px;background:#d3def0"></div>
<div class="cell" style="left:326px;top:683px;width:263px;height:24px;background:#c1cbc0;color:#000;">Sprechstunde</div>
<div class="hl" style="left:324px;top:708px;width:267px"></div>
<div class="a" style="left:591px;top:708px;width:4px;height:1px;background:#d3def0"></div>
<div class="cell" style="left:326px;top:713px;width:263px;height:24px;background:#80ff00;color:#000;letter-spacing:.12px;">Vorsorge</div>
<div class="hl" style="left:324px;top:738px;width:267px"></div>
<div class="a" style="left:591px;top:738px;width:4px;height:1px;background:#d3def0"></div>
<div class="hl" style="left:324px;top:768px;width:267px"></div>
<div class="a" style="left:591px;top:768px;width:4px;height:1px;background:#d3def0"></div>
<div class="cell" style="left:326px;top:773px;width:263px;height:24px;background:#c1cbc0;color:#000;">Sprechstunde</div>
<div class="hl" style="left:324px;top:798px;width:267px"></div>
<div class="a" style="left:591px;top:798px;width:4px;height:1px;background:#d3def0"></div>
<div class="cell" style="left:326px;top:803px;width:263px;height:24px;background:#e0eee0;color:#ff1493;letter-spacing:.22px;">Check-Up</div>
<div class="hl" style="left:324px;top:828px;width:267px"></div>
<div class="a" style="left:591px;top:828px;width:4px;height:1px;background:#d3def0"></div>
<div class="cell" style="left:326px;top:833px;width:263px;height:24px;background:#e0eee0;color:#ff1493;letter-spacing:.22px;">Check-Up</div>
<div class="hl" style="left:324px;top:858px;width:267px"></div>
<div class="a" style="left:591px;top:858px;width:4px;height:1px;background:#d3def0"></div>
<div class="hl" style="left:324px;top:888px;width:267px"></div>
<div class="a" style="left:591px;top:888px;width:4px;height:1px;background:#d3def0"></div>
<div class="hl" style="left:324px;top:918px;width:267px"></div>
<div class="a" style="left:591px;top:918px;width:4px;height:1px;background:#d3def0"></div>
<div class="hl" style="left:324px;top:948px;width:267px"></div>
<div class="a" style="left:591px;top:948px;width:4px;height:1px;background:#d3def0"></div>
<div class="hl" style="left:324px;top:978px;width:267px"></div>
<div class="a" style="left:591px;top:978px;width:4px;height:1px;background:#d3def0"></div>
<div class="cell" style="left:326px;top:983px;width:261px;height:20px;text-align:center">Pause</div>
<div class="a" style="left:599px;top:259px;width:1px;height:751px;background:#dbe4f1"></div>
<div class="a" style="left:600px;top:259px;width:1px;height:751px;background:#aebfd6"></div>
<div class="vl" style="left:866px;top:259px;height:751px"></div>
<div class="a" style="left:871px;top:259px;width:1px;height:751px;background:#d3def0"></div>
<div class="cell" style="left:602px;top:263px;width:263px;height:24px;background:#ffe4c4;color:#000;">Neue Patienten</div>
<div class="hl" style="left:600px;top:288px;width:267px"></div>
<div class="a" style="left:867px;top:288px;width:4px;height:1px;background:#d3def0"></div>
<div class="cell" style="left:602px;top:293px;width:263px;height:24px;background:#ffe4c4;color:#000;">Neue Patienten</div>
<div class="hl" style="left:600px;top:318px;width:267px"></div>
<div class="a" style="left:867px;top:318px;width:4px;height:1px;background:#d3def0"></div>
<div class="cell" style="left:602px;top:323px;width:263px;height:24px;background:#ffe4c4;color:#000;">Neue Patienten</div>
<div class="hl" style="left:600px;top:348px;width:267px"></div>
<div class="a" style="left:867px;top:348px;width:4px;height:1px;background:#d3def0"></div>
<div class="cell" style="left:602px;top:353px;width:263px;height:24px;background:#ffe4c4;color:#000;">Neue Patienten</div>
<div class="hl" style="left:600px;top:378px;width:267px"></div>
<div class="a" style="left:867px;top:378px;width:4px;height:1px;background:#d3def0"></div>
<div class="cell" style="left:602px;top:383px;width:263px;height:24px;background:#ffe4c4;color:#000;">Neue Patienten</div>
<div class="hl" style="left:600px;top:408px;width:267px"></div>
<div class="a" style="left:867px;top:408px;width:4px;height:1px;background:#d3def0"></div>
<div class="cell" style="left:602px;top:413px;width:263px;height:24px;background:#ffe4c4;color:#000;">Neue Patienten</div>
<div class="hl" style="left:600px;top:438px;width:267px"></div>
<div class="a" style="left:867px;top:438px;width:4px;height:1px;background:#d3def0"></div>
<div class="hl" style="left:600px;top:468px;width:267px"></div>
<div class="a" style="left:867px;top:468px;width:4px;height:1px;background:#d3def0"></div>
<div class="cell" style="left:602px;top:473px;width:263px;height:24px;background:#e0eee0;color:#ff1493;letter-spacing:.22px;">Check-Up</div>
<div class="hl" style="left:600px;top:498px;width:267px"></div>
<div class="a" style="left:867px;top:498px;width:4px;height:1px;background:#d3def0"></div>
<div class="cell" style="left:602px;top:503px;width:263px;height:24px;background:#e0eee0;color:#ff1493;letter-spacing:.22px;">Check-Up</div>
<div class="hl" style="left:600px;top:528px;width:267px"></div>
<div class="a" style="left:867px;top:528px;width:4px;height:1px;background:#d3def0"></div>
<div class="cell" style="left:602px;top:533px;width:263px;height:24px;background:#d1dcf1;color:#000;"></div>
<div class="hl" style="left:600px;top:558px;width:267px"></div>
<div class="a" style="left:867px;top:558px;width:4px;height:1px;background:#d3def0"></div>
<div class="cell" style="left:602px;top:563px;width:263px;height:24px;background:#f5ffd6;color:#000;letter-spacing:.2px;">Videosprechstunde</div>
<div class="hl" style="left:600px;top:588px;width:267px"></div>
<div class="a" style="left:867px;top:588px;width:4px;height:1px;background:#d3def0"></div>
<div class="hl" style="left:600px;top:618px;width:267px"></div>
<div class="a" style="left:867px;top:618px;width:4px;height:1px;background:#d3def0"></div>
<div class="hl" style="left:600px;top:648px;width:267px"></div>
<div class="a" style="left:867px;top:648px;width:4px;height:1px;background:#d3def0"></div>
<div class="cell" style="left:602px;top:653px;width:263px;height:24px;background:#80ff00;color:#000;letter-spacing:.12px;">Vorsorge</div>
<div class="hl" style="left:600px;top:678px;width:267px"></div>
<div class="a" style="left:867px;top:678px;width:4px;height:1px;background:#d3def0"></div>
<div class="cell" style="left:602px;top:683px;width:263px;height:24px;background:#c1cbc0;color:#000;">Sprechstunde</div>
<div class="hl" style="left:600px;top:708px;width:267px"></div>
<div class="a" style="left:867px;top:708px;width:4px;height:1px;background:#d3def0"></div>
<div class="cell" style="left:602px;top:713px;width:263px;height:24px;background:#80ff00;color:#000;letter-spacing:.12px;">Vorsorge</div>
<div class="hl" style="left:600px;top:738px;width:267px"></div>
<div class="a" style="left:867px;top:738px;width:4px;height:1px;background:#d3def0"></div>
<div class="hl" style="left:600px;top:768px;width:267px"></div>
<div class="a" style="left:867px;top:768px;width:4px;height:1px;background:#d3def0"></div>
<div class="cell" style="left:602px;top:773px;width:263px;height:24px;background:#c1cbc0;color:#000;">Sprechstunde</div>
<div class="hl" style="left:600px;top:798px;width:267px"></div>
<div class="a" style="left:867px;top:798px;width:4px;height:1px;background:#d3def0"></div>
<div class="cell" style="left:602px;top:803px;width:263px;height:24px;background:#e0eee0;color:#ff1493;letter-spacing:.22px;">Check-Up</div>
<div class="hl" style="left:600px;top:828px;width:267px"></div>
<div class="a" style="left:867px;top:828px;width:4px;height:1px;background:#d3def0"></div>
<div class="cell" style="left:602px;top:833px;width:263px;height:24px;background:#e0eee0;color:#ff1493;letter-spacing:.22px;">Check-Up</div>
<div class="hl" style="left:600px;top:858px;width:267px"></div>
<div class="a" style="left:867px;top:858px;width:4px;height:1px;background:#d3def0"></div>
<div class="cell" style="left:602px;top:863px;width:263px;height:24px;background:#f5ffd6;color:#000;letter-spacing:.2px;">Videosprechstunde</div>
<div class="hl" style="left:600px;top:888px;width:267px"></div>
<div class="a" style="left:867px;top:888px;width:4px;height:1px;background:#d3def0"></div>
<div class="hl" style="left:600px;top:918px;width:267px"></div>
<div class="a" style="left:867px;top:918px;width:4px;height:1px;background:#d3def0"></div>
<div class="hl" style="left:600px;top:948px;width:267px"></div>
<div class="a" style="left:867px;top:948px;width:4px;height:1px;background:#d3def0"></div>
<div class="hl" style="left:600px;top:978px;width:267px"></div>
<div class="a" style="left:867px;top:978px;width:4px;height:1px;background:#d3def0"></div>
<div class="cell" style="left:602px;top:983px;width:261px;height:20px;text-align:center">Pause</div>
<div class="a" style="left:875px;top:259px;width:1px;height:751px;background:#dbe4f1"></div>
<div class="a" style="left:876px;top:259px;width:1px;height:751px;background:#aebfd6"></div>
<div class="vl" style="left:1142px;top:259px;height:751px"></div>
<div class="a" style="left:1147px;top:259px;width:1px;height:751px;background:#d3def0"></div>
<div class="cell" style="left:878px;top:263px;width:263px;height:24px;background:#ffacd6;color:#000;"></div>
<div class="hl" style="left:876px;top:288px;width:267px"></div>
<div class="a" style="left:1143px;top:288px;width:4px;height:1px;background:#d3def0"></div>
<div class="cell" style="left:878px;top:293px;width:263px;height:24px;background:#e0eee0;color:#ff1493;letter-spacing:.22px;">Check-Up</div>
<div class="hl" style="left:876px;top:318px;width:267px"></div>
<div class="a" style="left:1143px;top:318px;width:4px;height:1px;background:#d3def0"></div>
<div class="cell" style="left:878px;top:323px;width:263px;height:24px;background:#e0eee0;color:#ff1493;letter-spacing:.22px;">Check-Up</div>
<div class="hl" style="left:876px;top:348px;width:267px"></div>
<div class="a" style="left:1143px;top:348px;width:4px;height:1px;background:#d3def0"></div>
<div class="hl" style="left:876px;top:378px;width:267px"></div>
<div class="a" style="left:1143px;top:378px;width:4px;height:1px;background:#d3def0"></div>
<div class="hl" style="left:876px;top:408px;width:267px"></div>
<div class="a" style="left:1143px;top:408px;width:4px;height:1px;background:#d3def0"></div>
<div class="cell" style="left:878px;top:413px;width:263px;height:24px;background:#ffacd6;color:#000;"></div>
<div class="hl" style="left:876px;top:438px;width:267px"></div>
<div class="a" style="left:1143px;top:438px;width:4px;height:1px;background:#d3def0"></div>
<div class="hl" style="left:876px;top:468px;width:267px"></div>
<div class="a" style="left:1143px;top:468px;width:4px;height:1px;background:#d3def0"></div>
<div class="hl" style="left:876px;top:498px;width:267px"></div>
<div class="a" style="left:1143px;top:498px;width:4px;height:1px;background:#d3def0"></div>
<div class="cell" style="left:878px;top:503px;width:263px;height:24px;background:#80ff00;color:#000;letter-spacing:.12px;">Vorsorge</div>
<div class="hl" style="left:876px;top:528px;width:267px"></div>
<div class="a" style="left:1143px;top:528px;width:4px;height:1px;background:#d3def0"></div>
<div class="cell" style="left:878px;top:533px;width:263px;height:24px;background:#80ff00;color:#000;letter-spacing:.12px;">Vorsorge</div>
<div class="hl" style="left:876px;top:558px;width:267px"></div>
<div class="a" style="left:1143px;top:558px;width:4px;height:1px;background:#d3def0"></div>
<div class="cell" style="left:878px;top:563px;width:263px;height:24px;background:#e0eee0;color:#ff1493;letter-spacing:.22px;">Check-Up</div>
<div class="hl" style="left:876px;top:588px;width:267px"></div>
<div class="a" style="left:1143px;top:588px;width:4px;height:1px;background:#d3def0"></div>
<div class="cell" style="left:878px;top:593px;width:263px;height:24px;background:#e0eee0;color:#ff1493;letter-spacing:.22px;">Check-Up</div>
<div class="hl" style="left:876px;top:618px;width:267px"></div>
<div class="a" style="left:1143px;top:618px;width:4px;height:1px;background:#d3def0"></div>
<div class="hl" style="left:876px;top:648px;width:267px"></div>
<div class="a" style="left:1143px;top:648px;width:4px;height:1px;background:#d3def0"></div>
<div class="hl" style="left:876px;top:678px;width:267px"></div>
<div class="a" style="left:1143px;top:678px;width:4px;height:1px;background:#d3def0"></div>
<div class="cell" style="left:878px;top:683px;width:263px;height:24px;background:#c1cbc0;color:#000;">Sprechstunde</div>
<div class="hl" style="left:876px;top:708px;width:267px"></div>
<div class="a" style="left:1143px;top:708px;width:4px;height:1px;background:#d3def0"></div>
<div class="cell" style="left:878px;top:713px;width:263px;height:24px;background:#ffacd6;color:#000;"></div>
<div class="hl" style="left:876px;top:738px;width:267px"></div>
<div class="a" style="left:1143px;top:738px;width:4px;height:1px;background:#d3def0"></div>
<div class="hl" style="left:876px;top:768px;width:267px"></div>
<div class="a" style="left:1143px;top:768px;width:4px;height:1px;background:#d3def0"></div>
<div class="cell" style="left:878px;top:773px;width:263px;height:24px;background:#c1cbc0;color:#000;">Sprechstunde</div>
<div class="hl" style="left:876px;top:798px;width:267px"></div>
<div class="a" style="left:1143px;top:798px;width:4px;height:1px;background:#d3def0"></div>
<div class="a" style="left:1143px;top:828px;width:4px;height:1px;background:#d3def0"></div>
<div class="a" style="left:1143px;top:858px;width:4px;height:1px;background:#d3def0"></div>
<div class="a" style="left:1143px;top:888px;width:4px;height:1px;background:#d3def0"></div>
<div class="a" style="left:1143px;top:918px;width:4px;height:1px;background:#d3def0"></div>
<div class="a" style="left:1143px;top:948px;width:4px;height:1px;background:#d3def0"></div>
<div class="a" style="left:1143px;top:978px;width:4px;height:1px;background:#d3def0"></div>
<div class="cell" style="left:878px;top:803px;width:261px;height:20px;text-align:center">Pause</div>
<div class="a" style="left:1151px;top:259px;width:1px;height:751px;background:#dbe4f1"></div>
<div class="a" style="left:1152px;top:259px;width:1px;height:751px;background:#aebfd6"></div>
<div class="vl" style="left:1418px;top:259px;height:751px"></div>
<div class="a" style="left:1423px;top:259px;width:1px;height:751px;background:#d3def0"></div>
<div class="cell" style="left:1154px;top:263px;width:263px;height:24px;background:#ffe4c4;color:#000;">Neue Patienten</div>
<div class="hl" style="left:1152px;top:288px;width:267px"></div>
<div class="a" style="left:1419px;top:288px;width:4px;height:1px;background:#d3def0"></div>
<div class="cell" style="left:1154px;top:293px;width:263px;height:24px;background:#ffe4c4;color:#000;">Neue Patienten</div>
<div class="hl" style="left:1152px;top:318px;width:267px"></div>
<div class="a" style="left:1419px;top:318px;width:4px;height:1px;background:#d3def0"></div>
<div class="cell" style="left:1154px;top:323px;width:263px;height:24px;background:#ffe4c4;color:#000;">Neue Patienten</div>
<div class="hl" style="left:1152px;top:348px;width:267px"></div>
<div class="a" style="left:1419px;top:348px;width:4px;height:1px;background:#d3def0"></div>
<div class="cell" style="left:1154px;top:353px;width:263px;height:24px;background:#ffe4c4;color:#000;">Neue Patienten</div>
<div class="hl" style="left:1152px;top:378px;width:267px"></div>
<div class="a" style="left:1419px;top:378px;width:4px;height:1px;background:#d3def0"></div>
<div class="cell" style="left:1154px;top:383px;width:263px;height:24px;background:#ffe4c4;color:#000;">Neue Patienten</div>
<div class="hl" style="left:1152px;top:408px;width:267px"></div>
<div class="a" style="left:1419px;top:408px;width:4px;height:1px;background:#d3def0"></div>
<div class="cell" style="left:1154px;top:413px;width:263px;height:24px;background:#ffe4c4;color:#000;">Neue Patienten</div>
<div class="hl" style="left:1152px;top:438px;width:267px"></div>
<div class="a" style="left:1419px;top:438px;width:4px;height:1px;background:#d3def0"></div>
<div class="cell" style="left:1154px;top:443px;width:263px;height:24px;background:#f5ffd6;color:#000;letter-spacing:.2px;">Videosprechstunde</div>
<div class="hl" style="left:1152px;top:468px;width:267px"></div>
<div class="a" style="left:1419px;top:468px;width:4px;height:1px;background:#d3def0"></div>
<div class="cell" style="left:1154px;top:473px;width:263px;height:24px;background:#e0eee0;color:#ff1493;letter-spacing:.22px;">Check-Up</div>
<div class="hl" style="left:1152px;top:498px;width:267px"></div>
<div class="a" style="left:1419px;top:498px;width:4px;height:1px;background:#d3def0"></div>
<div class="cell" style="left:1154px;top:503px;width:263px;height:24px;background:#e0eee0;color:#ff1493;letter-spacing:.22px;">Check-Up</div>
<div class="hl" style="left:1152px;top:528px;width:267px"></div>
<div class="a" style="left:1419px;top:528px;width:4px;height:1px;background:#d3def0"></div>
<div class="a" style="left:1419px;top:558px;width:4px;height:1px;background:#d3def0"></div>
<div class="a" style="left:1419px;top:588px;width:4px;height:1px;background:#d3def0"></div>
<div class="cell" style="left:1154px;top:533px;width:263px;height:84px;background:#d5d5fb;letter-spacing:.16px">Langer Termin</div>
<div class="hl" style="left:1152px;top:618px;width:267px"></div>
<div class="a" style="left:1419px;top:618px;width:4px;height:1px;background:#d3def0"></div>
<div class="hl" style="left:1152px;top:648px;width:267px"></div>
<div class="a" style="left:1419px;top:648px;width:4px;height:1px;background:#d3def0"></div>
<div class="cell" style="left:1154px;top:653px;width:263px;height:24px;background:#80ff00;color:#000;letter-spacing:.12px;">Vorsorge</div>
<div class="hl" style="left:1152px;top:678px;width:267px"></div>
<div class="a" style="left:1419px;top:678px;width:4px;height:1px;background:#d3def0"></div>
<div class="cell" style="left:1154px;top:683px;width:263px;height:24px;background:#c1cbc0;color:#000;">Sprechstunde</div>
<div class="hl" style="left:1152px;top:708px;width:267px"></div>
<div class="a" style="left:1419px;top:708px;width:4px;height:1px;background:#d3def0"></div>
<div class="cell" style="left:1154px;top:713px;width:263px;height:24px;background:#80ff00;color:#000;letter-spacing:.12px;">Vorsorge</div>
<div class="hl" style="left:1152px;top:738px;width:267px"></div>
<div class="a" style="left:1419px;top:738px;width:4px;height:1px;background:#d3def0"></div>
<div class="cell" style="left:1154px;top:743px;width:263px;height:24px;background:#f5ffd6;color:#000;letter-spacing:.2px;">Videosprechstunde</div>
<div class="hl" style="left:1152px;top:768px;width:267px"></div>
<div class="a" style="left:1419px;top:768px;width:4px;height:1px;background:#d3def0"></div>
<div class="cell" style="left:1154px;top:773px;width:263px;height:24px;background:#c1cbc0;color:#000;">Sprechstunde</div>
<div class="hl" style="left:1152px;top:798px;width:267px"></div>
<div class="a" style="left:1419px;top:798px;width:4px;height:1px;background:#d3def0"></div>
<div class="cell" style="left:1154px;top:803px;width:263px;height:24px;background:#ffe4c4;color:#000;">Neue Patienten</div>
<div class="hl" style="left:1152px;top:828px;width:267px"></div>
<div class="a" style="left:1419px;top:828px;width:4px;height:1px;background:#d3def0"></div>
<div class="cell" style="left:1154px;top:833px;width:263px;height:24px;background:#ffe4c4;color:#000;">Neue Patienten</div>
<div class="hl" style="left:1152px;top:858px;width:267px"></div>
<div class="a" style="left:1419px;top:858px;width:4px;height:1px;background:#d3def0"></div>
<div class="cell" style="left:1154px;top:863px;width:263px;height:24px;background:#ffe4c4;color:#000;">Neue Patienten</div>
<div class="hl" style="left:1152px;top:888px;width:267px"></div>
<div class="a" style="left:1419px;top:888px;width:4px;height:1px;background:#d3def0"></div>
<div class="cell" style="left:1154px;top:893px;width:263px;height:24px;background:#ffe4c4;color:#000;">Neue Patienten</div>
<div class="hl" style="left:1152px;top:918px;width:267px"></div>
<div class="a" style="left:1419px;top:918px;width:4px;height:1px;background:#d3def0"></div>
<div class="cell" style="left:1154px;top:923px;width:263px;height:24px;background:#ffe4c4;color:#000;">Neue Patienten</div>
<div class="hl" style="left:1152px;top:948px;width:267px"></div>
<div class="a" style="left:1419px;top:948px;width:4px;height:1px;background:#d3def0"></div>
<div class="hl" style="left:1152px;top:978px;width:267px"></div>
<div class="a" style="left:1419px;top:978px;width:4px;height:1px;background:#d3def0"></div>
<div class="cell" style="left:1154px;top:983px;width:263px;height:27px;background:#f0f0f0;color:#000;"></div>
<div class="a" style="left:1427px;top:259px;width:1px;height:751px;background:#dbe4f1"></div>
<div class="a" style="left:1428px;top:259px;width:1px;height:751px;background:#aebfd6"></div>
<div class="vl" style="left:1694px;top:259px;height:751px"></div>
<div class="a" style="left:1699px;top:259px;width:1px;height:751px;background:#d3def0"></div>
<div class="hl" style="left:1428px;top:288px;width:267px"></div>
<div class="a" style="left:1695px;top:288px;width:4px;height:1px;background:#d3def0"></div>
<div class="hl" style="left:1428px;top:318px;width:267px"></div>
<div class="a" style="left:1695px;top:318px;width:4px;height:1px;background:#d3def0"></div>
<div class="hl" style="left:1428px;top:348px;width:267px"></div>
<div class="a" style="left:1695px;top:348px;width:4px;height:1px;background:#d3def0"></div>
<div class="hl" style="left:1428px;top:378px;width:267px"></div>
<div class="a" style="left:1695px;top:378px;width:4px;height:1px;background:#d3def0"></div>
<div class="hl" style="left:1428px;top:408px;width:267px"></div>
<div class="a" style="left:1695px;top:408px;width:4px;height:1px;background:#d3def0"></div>
<div class="hl" style="left:1428px;top:438px;width:267px"></div>
<div class="a" style="left:1695px;top:438px;width:4px;height:1px;background:#d3def0"></div>
<div class="hl" style="left:1428px;top:468px;width:267px"></div>
<div class="a" style="left:1695px;top:468px;width:4px;height:1px;background:#d3def0"></div>
<div class="hl" style="left:1428px;top:498px;width:267px"></div>
<div class="a" style="left:1695px;top:498px;width:4px;height:1px;background:#d3def0"></div>
<div class="hl" style="left:1428px;top:528px;width:267px"></div>
<div class="a" style="left:1695px;top:528px;width:4px;height:1px;background:#d3def0"></div>
<div class="cell" style="left:1430px;top:533px;width:263px;height:24px;background:#ffff00;color:#000;">Gutachten</div>
<div class="hl" style="left:1428px;top:558px;width:267px"></div>
<div class="a" style="left:1695px;top:558px;width:4px;height:1px;background:#d3def0"></div>
<div class="cell" style="left:1430px;top:563px;width:263px;height:24px;background:#ffff00;color:#000;">Gutachten</div>
<div class="hl" style="left:1428px;top:588px;width:267px"></div>
<div class="a" style="left:1695px;top:588px;width:4px;height:1px;background:#d3def0"></div>
<div class="cell" style="left:1430px;top:593px;width:263px;height:24px;background:#ffff00;color:#000;">Gutachten</div>
<div class="hl" style="left:1428px;top:618px;width:267px"></div>
<div class="a" style="left:1695px;top:618px;width:4px;height:1px;background:#d3def0"></div>
<div class="cell" style="left:1430px;top:623px;width:263px;height:24px;background:#ffff00;color:#000;">Gutachten</div>
<div class="hl" style="left:1428px;top:648px;width:267px"></div>
<div class="a" style="left:1695px;top:648px;width:4px;height:1px;background:#d3def0"></div>
<div class="cell" style="left:1430px;top:653px;width:263px;height:24px;background:#ffff00;color:#000;">Gutachten</div>
<div class="hl" style="left:1428px;top:678px;width:267px"></div>
<div class="a" style="left:1695px;top:678px;width:4px;height:1px;background:#d3def0"></div>
<div class="cell" style="left:1430px;top:683px;width:263px;height:24px;background:#ffff00;color:#000;">Gutachten</div>
<div class="hl" style="left:1428px;top:708px;width:267px"></div>
<div class="a" style="left:1695px;top:708px;width:4px;height:1px;background:#d3def0"></div>
<div class="cell" style="left:1430px;top:713px;width:263px;height:24px;background:#ffff00;color:#000;">Gutachten</div>
<div class="hl" style="left:1428px;top:738px;width:267px"></div>
<div class="a" style="left:1695px;top:738px;width:4px;height:1px;background:#d3def0"></div>
<div class="hl" style="left:1428px;top:768px;width:267px"></div>
<div class="a" style="left:1695px;top:768px;width:4px;height:1px;background:#d3def0"></div>
<div class="hl" style="left:1428px;top:798px;width:267px"></div>
<div class="a" style="left:1695px;top:798px;width:4px;height:1px;background:#d3def0"></div>
<div class="hl" style="left:1428px;top:828px;width:267px"></div>
<div class="a" style="left:1695px;top:828px;width:4px;height:1px;background:#d3def0"></div>
<div class="hl" style="left:1428px;top:858px;width:267px"></div>
<div class="a" style="left:1695px;top:858px;width:4px;height:1px;background:#d3def0"></div>
<div class="hl" style="left:1428px;top:888px;width:267px"></div>
<div class="a" style="left:1695px;top:888px;width:4px;height:1px;background:#d3def0"></div>
<div class="hl" style="left:1428px;top:918px;width:267px"></div>
<div class="a" style="left:1695px;top:918px;width:4px;height:1px;background:#d3def0"></div>
<div class="hl" style="left:1428px;top:948px;width:267px"></div>
<div class="a" style="left:1695px;top:948px;width:4px;height:1px;background:#d3def0"></div>
<div class="hl" style="left:1428px;top:978px;width:267px"></div>
<div class="a" style="left:1695px;top:978px;width:4px;height:1px;background:#d3def0"></div>
<div class="cell" style="left:1430px;top:983px;width:263px;height:27px;background:#f0f0f0;color:#000;"></div>
<div class="a" style="left:5px;top:529px;width:38px;height:30px;background:linear-gradient(90deg,#f8d99a,#f1c465)"></div>
<div class="t" style="left:0;width:15px;text-align:right;top:263px;font-size:12.5px;line-height:13px;color:#000">8</div>
<div class="t" style="left:19px;top:261px;font-size:11px;line-height:12px;color:#000">00</div>
<div class="a" style="left:28px;top:289px;width:11px;height:1px;background:#7f9fd6"></div>
<div class="t" style="left:19.5px;top:291.5px;font-size:11px;line-height:12px;color:#000">10</div>
<div class="a" style="left:28px;top:319px;width:11px;height:1px;background:#7f9fd6"></div>
<div class="t" style="left:19.5px;top:321.5px;font-size:11px;line-height:12px;color:#000">20</div>
<div class="a" style="left:28px;top:349px;width:11px;height:1px;background:#7f9fd6"></div>
<div class="t" style="left:19.5px;top:351.5px;font-size:11px;line-height:12px;color:#000">30</div>
<div class="a" style="left:28px;top:379px;width:11px;height:1px;background:#7f9fd6"></div>
<div class="t" style="left:19.5px;top:381.5px;font-size:11px;line-height:12px;color:#000">40</div>
<div class="a" style="left:28px;top:409px;width:11px;height:1px;background:#7f9fd6"></div>
<div class="t" style="left:19.5px;top:411.5px;font-size:11px;line-height:12px;color:#000">50</div>
<div class="a" style="left:8px;top:439px;width:31px;height:1px;background:#7f9fd6"></div>
<div class="t" style="left:0;width:15px;text-align:right;top:443px;font-size:12.5px;line-height:13px;color:#000">9</div>
<div class="t" style="left:19px;top:441px;font-size:11px;line-height:12px;color:#000">00</div>
<div class="a" style="left:28px;top:469px;width:11px;height:1px;background:#7f9fd6"></div>
<div class="t" style="left:19.5px;top:471.5px;font-size:11px;line-height:12px;color:#000">10</div>
<div class="a" style="left:28px;top:499px;width:11px;height:1px;background:#7f9fd6"></div>
<div class="t" style="left:19.5px;top:501.5px;font-size:11px;line-height:12px;color:#000">20</div>
<div class="a" style="left:28px;top:529px;width:11px;height:1px;background:#7f9fd6"></div>
<div class="t" style="left:19.5px;top:531.5px;font-size:11px;line-height:12px;color:#000">30</div>
<div class="a" style="left:28px;top:559px;width:11px;height:1px;background:#7f9fd6"></div>
<div class="t" style="left:19.5px;top:561.5px;font-size:11px;line-height:12px;color:#000">40</div>
<div class="a" style="left:28px;top:589px;width:11px;height:1px;background:#7f9fd6"></div>
<div class="t" style="left:19.5px;top:591.5px;font-size:11px;line-height:12px;color:#000">50</div>
<div class="a" style="left:8px;top:619px;width:31px;height:1px;background:#7f9fd6"></div>
<div class="t" style="left:0;width:21px;text-align:right;top:623px;font-size:12.5px;line-height:13px;color:#000">10</div>
<div class="t" style="left:25px;top:621px;font-size:11px;line-height:12px;color:#000">00</div>
<div class="a" style="left:28px;top:649px;width:11px;height:1px;background:#7f9fd6"></div>
<div class="t" style="left:19.5px;top:651.5px;font-size:11px;line-height:12px;color:#000">10</div>
<div class="a" style="left:28px;top:679px;width:11px;height:1px;background:#7f9fd6"></div>
<div class="t" style="left:19.5px;top:681.5px;font-size:11px;line-height:12px;color:#000">20</div>
<div class="a" style="left:28px;top:709px;width:11px;height:1px;background:#7f9fd6"></div>
<div class="t" style="left:19.5px;top:711.5px;font-size:11px;line-height:12px;color:#000">30</div>
<div class="a" style="left:28px;top:739px;width:11px;height:1px;background:#7f9fd6"></div>
<div class="t" style="left:19.5px;top:741.5px;font-size:11px;line-height:12px;color:#000">40</div>
<div class="a" style="left:28px;top:769px;width:11px;height:1px;background:#7f9fd6"></div>
<div class="t" style="left:19.5px;top:771.5px;font-size:11px;line-height:12px;color:#000">50</div>
<div class="a" style="left:8px;top:799px;width:31px;height:1px;background:#7f9fd6"></div>
<div class="t" style="left:0;width:21px;text-align:right;top:803px;font-size:12.5px;line-height:13px;color:#000">11</div>
<div class="t" style="left:25px;top:801px;font-size:11px;line-height:12px;color:#000">00</div>
<div class="a" style="left:28px;top:829px;width:11px;height:1px;background:#7f9fd6"></div>
<div class="t" style="left:19.5px;top:831.5px;font-size:11px;line-height:12px;color:#000">10</div>
<div class="a" style="left:28px;top:859px;width:11px;height:1px;background:#7f9fd6"></div>
<div class="t" style="left:19.5px;top:861.5px;font-size:11px;line-height:12px;color:#000">20</div>
<div class="a" style="left:28px;top:889px;width:11px;height:1px;background:#7f9fd6"></div>
<div class="t" style="left:19.5px;top:891.5px;font-size:11px;line-height:12px;color:#000">30</div>
<div class="a" style="left:28px;top:919px;width:11px;height:1px;background:#7f9fd6"></div>
<div class="t" style="left:19.5px;top:921.5px;font-size:11px;line-height:12px;color:#000">40</div>
<div class="a" style="left:28px;top:949px;width:11px;height:1px;background:#7f9fd6"></div>
<div class="t" style="left:19.5px;top:951.5px;font-size:11px;line-height:12px;color:#000">50</div>
<div class="a" style="left:8px;top:979px;width:31px;height:1px;background:#7f9fd6"></div>
<div class="t" style="left:0;width:21px;text-align:right;top:983px;font-size:12.5px;line-height:13px;color:#000">12</div>
<div class="t" style="left:25px;top:981px;font-size:11px;line-height:12px;color:#000">00</div>
<div class="a" style="left:28px;top:1009px;width:11px;height:1px;background:#7f9fd6"></div>
<div class="t" style="left:19.5px;top:1011.5px;font-size:11px;line-height:12px;color:#000">10</div>
<div class="a" style="left:7px;top:580px;width:35px;height:3px;background:#f00;border-radius:1.5px"></div>
<div class="a" style="left:1px;top:1010px;width:1920px;height:3px;background:#f3f4f5"></div>
<div class="a" style="left:1px;top:1013px;width:1920px;height:1px;background:#dcdcdc"></div>
<div class="a" style="left:1px;top:1014px;width:1920px;height:17px;background:#fff"></div><div class="t" style="left:5px;top:1016px;font-size:11px;color:#111;line-height:12px">aktueller Patient: Mentz, Tommy</div><div class="t" style="left:453px;top:1016px;font-size:10.85px;color:#111;line-height:12px">Es wurden keine Patientendaten empfangen.</div><div class="t" style="left:1070px;top:1016px;font-size:10.85px;color:#7a7a7a;line-height:12px">Abfrage neue Daten: 0,152 s</div><div class="t" style="left:1370px;top:1016px;font-size:10.85px;color:#7a7a7a;line-height:12px">Resize-Dauer: 0,548 s</div><svg class="a" style="left:1524px;top:1016px" width="11" height="11" viewBox="0 0 11 11"><path d="M5.5 0.5v10M0.5 5.5h10" stroke="#333" stroke-width="1.3"/></svg><div class="t" style="left:1540px;top:1016px;font-size:10.85px;color:#111;line-height:12px">Vergrößern</div><svg class="a" style="left:1624px;top:1016px" width="11" height="11" viewBox="0 0 11 11"><path d="M0.5 5.5h10" stroke="#333" stroke-width="1.3"/></svg><div class="t" style="left:1640px;top:1016px;font-size:10.85px;color:#111;line-height:12px">Verkleinern</div><div class="t" style="left:1724px;top:1016px;font-size:11.4px;color:#111;line-height:12px">Dienstag, der 30.05.2023</div><div class="t" style="left:1877px;top:1016px;font-size:11.4px;color:#111;line-height:12px">09:47</div>
<div class="a" style="left:1733px;top:204px;width:180px;height:170px;border:1px solid #b3b7be;background:#fff"></div><div class="a" style="left:1734px;top:205px;width:178px;height:33px;background:#f4f5f7;border-bottom:1px solid #c9ccd2"></div><div class="t" style="left:1734px;top:208px;width:196px;text-align:center;font-size:10.5px;line-height:12px;color:#111;width:198px">Mai 2023</div><div class="mc" style="left:1756.5px;top:220px;font-size:10px">Mo</div><div class="mc" style="left:1777.5px;top:220px;font-size:10px">Di</div><div class="mc" style="left:1798.5px;top:220px;font-size:10px">Mi</div><div class="mc" style="left:1819.5px;top:220px;font-size:10px">Do</div><div class="mc" style="left:1840.5px;top:220px;font-size:10px">Fr</div><div class="mc" style="left:1861.5px;top:220px;font-size:10px">Sa</div><div class="mc" style="left:1882.5px;top:220px;font-size:10px">So</div><div class="a" style="left:1754px;top:238px;width:1px;height:134px;background:#b9bcc2"></div><div class="mc" style="left:1732.5px;top:238px;font-size:11px">18</div><div class="a" style="left:1759.0px;top:238px;width:17px;height:19px;background:#ffff80"></div><div class="mc" style="left:1756.5px;top:238px;font-weight:700;">1</div><div class="mc" style="left:1777.5px;top:238px;">2</div><div class="mc" style="left:1798.5px;top:238px;">3</div><div class="mc" style="left:1819.5px;top:238px;">4</div><div class="mc" style="left:1840.5px;top:238px;">5</div><div class="mc" style="left:1861.5px;top:238px;color:#f00;">6</div><div class="mc" style="left:1882.5px;top:238px;color:#f00;">7</div><div class="mc" style="left:1732.5px;top:259px;font-size:11px">19</div><div class="mc" style="left:1756.5px;top:259px;">8</div><div class="mc" style="left:1777.5px;top:259px;">9</div><div class="mc" style="left:1798.5px;top:259px;">10</div><div class="mc" style="left:1819.5px;top:259px;">11</div><div class="mc" style="left:1840.5px;top:259px;">12</div><div class="mc" style="left:1861.5px;top:259px;color:#f00;">13</div><div class="mc" style="left:1882.5px;top:259px;color:#f00;">14</div><div class="mc" style="left:1732.5px;top:280px;font-size:11px">20</div><div class="mc" style="left:1756.5px;top:280px;">15</div><div class="mc" style="left:1777.5px;top:280px;">16</div><div class="mc" style="left:1798.5px;top:280px;">17</div><div class="a" style="left:1822.0px;top:280px;width:17px;height:19px;background:#ffff80"></div><div class="mc" style="left:1819.5px;top:280px;font-weight:700;">18</div><div class="mc" style="left:1840.5px;top:280px;">19</div><div class="mc" style="left:1861.5px;top:280px;color:#f00;">20</div><div class="mc" style="left:1882.5px;top:280px;color:#f00;">21</div><div class="mc" style="left:1732.5px;top:301px;font-size:11px">21</div><div class="mc" style="left:1756.5px;top:301px;">22</div><div class="mc" style="left:1777.5px;top:301px;">23</div><div class="mc" style="left:1798.5px;top:301px;">24</div><div class="mc" style="left:1819.5px;top:301px;">25</div><div class="mc" style="left:1840.5px;top:301px;">26</div><div class="mc" style="left:1861.5px;top:301px;color:#f00;">27</div><div class="mc" style="left:1882.5px;top:301px;color:#f00;">28</div><div class="mc" style="left:1732.5px;top:322px;font-size:11px">22</div><div class="a" style="left:1759.0px;top:322px;width:17px;height:19px;background:#ffff80"></div><div class="mc" style="left:1756.5px;top:322px;font-weight:700;">29</div><div class="a" style="left:1779.0px;top:323px;width:19px;height:20px;border-left:1px solid #888;border-top:1px solid #888"></div><div class="mc" style="left:1777.5px;top:322px;">30</div><div class="mc" style="left:1798.5px;top:322px;">31</div><div class="mc" style="left:1732.5px;top:343px;font-size:11px">23</div><div class="a" style="left:1733px;top:374px;width:180px;height:170px;border:1px solid #b3b7be;background:#fff"></div><div class="a" style="left:1734px;top:375px;width:178px;height:33px;background:#f4f5f7;border-bottom:1px solid #c9ccd2"></div><div class="t" style="left:1734px;top:378px;width:196px;text-align:center;font-size:10.5px;line-height:12px;color:#111;width:198px">Jun 2023</div><div class="mc" style="left:1756.5px;top:390px;font-size:10px">Mo</div><div class="mc" style="left:1777.5px;top:390px;font-size:10px">Di</div><div class="mc" style="left:1798.5px;top:390px;font-size:10px">Mi</div><div class="mc" style="left:1819.5px;top:390px;font-size:10px">Do</div><div class="mc" style="left:1840.5px;top:390px;font-size:10px">Fr</div><div class="mc" style="left:1861.5px;top:390px;font-size:10px">Sa</div><div class="mc" style="left:1882.5px;top:390px;font-size:10px">So</div><div class="a" style="left:1754px;top:408px;width:1px;height:134px;background:#b9bcc2"></div><div class="mc" style="left:1732.5px;top:408px;font-size:11px">22</div><div class="mc" style="left:1819.5px;top:408px;">1</div><div class="mc" style="left:1840.5px;top:408px;">2</div><div class="mc" style="left:1861.5px;top:408px;color:#f00;">3</div><div class="mc" style="left:1882.5px;top:408px;color:#f00;">4</div><div class="mc" style="left:1732.5px;top:429px;font-size:11px">23</div><div class="mc" style="left:1756.5px;top:429px;">5</div><div class="mc" style="left:1777.5px;top:429px;">6</div><div class="mc" style="left:1798.5px;top:429px;">7</div><div class="mc" style="left:1819.5px;top:429px;">8</div><div class="mc" style="left:1840.5px;top:429px;">9</div><div class="mc" style="left:1861.5px;top:429px;color:#f00;">10</div><div class="mc" style="left:1882.5px;top:429px;color:#f00;">11</div><div class="mc" style="left:1732.5px;top:450px;font-size:11px">24</div><div class="mc" style="left:1756.5px;top:450px;">12</div><div class="mc" style="left:1777.5px;top:450px;">13</div><div class="mc" style="left:1798.5px;top:450px;">14</div><div class="mc" style="left:1819.5px;top:450px;">15</div><div class="mc" style="left:1840.5px;top:450px;">16</div><div class="mc" style="left:1861.5px;top:450px;color:#f00;">17</div><div class="mc" style="left:1882.5px;top:450px;color:#f00;">18</div><div class="mc" style="left:1732.5px;top:471px;font-size:11px">25</div><div class="mc" style="left:1756.5px;top:471px;">19</div><div class="mc" style="left:1777.5px;top:471px;">20</div><div class="mc" style="left:1798.5px;top:471px;">21</div><div class="mc" style="left:1819.5px;top:471px;">22</div><div class="mc" style="left:1840.5px;top:471px;">23</div><div class="mc" style="left:1861.5px;top:471px;color:#f00;">24</div><div class="mc" style="left:1882.5px;top:471px;color:#f00;">25</div><div class="mc" style="left:1732.5px;top:492px;font-size:11px">26</div><div class="mc" style="left:1756.5px;top:492px;">26</div><div class="mc" style="left:1777.5px;top:492px;">27</div><div class="mc" style="left:1798.5px;top:492px;">28</div><div class="mc" style="left:1819.5px;top:492px;">29</div><div class="mc" style="left:1840.5px;top:492px;">30</div><div class="mc" style="left:1732.5px;top:513px;font-size:11px">27</div><div class="a" style="left:1733px;top:544px;width:180px;height:170px;border:1px solid #b3b7be;background:#fff"></div><div class="a" style="left:1734px;top:545px;width:178px;height:33px;background:#f4f5f7;border-bottom:1px solid #c9ccd2"></div><div class="t" style="left:1734px;top:548px;width:196px;text-align:center;font-size:10.5px;line-height:12px;color:#111;width:198px">Jul 2023</div><div class="mc" style="left:1756.5px;top:560px;font-size:10px">Mo</div><div class="mc" style="left:1777.5px;top:560px;font-size:10px">Di</div><div class="mc" style="left:1798.5px;top:560px;font-size:10px">Mi</div><div class="mc" style="left:1819.5px;top:560px;font-size:10px">Do</div><div class="mc" style="left:1840.5px;top:560px;font-size:10px">Fr</div><div class="mc" style="left:1861.5px;top:560px;font-size:10px">Sa</div><div class="mc" style="left:1882.5px;top:560px;font-size:10px">So</div><div class="a" style="left:1754px;top:578px;width:1px;height:134px;background:#b9bcc2"></div><div class="mc" style="left:1732.5px;top:578px;font-size:11px">26</div><div class="mc" style="left:1861.5px;top:578px;color:#f00;">1</div><div class="mc" style="left:1882.5px;top:578px;color:#f00;">2</div><div class="mc" style="left:1732.5px;top:599px;font-size:11px">27</div><div class="mc" style="left:1756.5px;top:599px;">3</div><div class="mc" style="left:1777.5px;top:599px;">4</div><div class="mc" style="left:1798.5px;top:599px;">5</div><div class="mc" style="left:1819.5px;top:599px;">6</div><div class="mc" style="left:1840.5px;top:599px;">7</div><div class="mc" style="left:1861.5px;top:599px;color:#f00;">8</div><div class="mc" style="left:1882.5px;top:599px;color:#f00;">9</div><div class="mc" style="left:1732.5px;top:620px;font-size:11px">28</div><div class="mc" style="left:1756.5px;top:620px;">10</div><div class="mc" style="left:1777.5px;top:620px;">11</div><div class="mc" style="left:1798.5px;top:620px;">12</div><div class="mc" style="left:1819.5px;top:620px;">13</div><div class="mc" style="left:1840.5px;top:620px;">14</div><div class="mc" style="left:1861.5px;top:620px;color:#f00;">15</div><div class="mc" style="left:1882.5px;top:620px;color:#f00;">16</div><div class="mc" style="left:1732.5px;top:641px;font-size:11px">29</div><div class="mc" style="left:1756.5px;top:641px;">17</div><div class="mc" style="left:1777.5px;top:641px;">18</div><div class="a" style="left:1800.0px;top:640px;width:19px;height:21px;background:#3f74ad"></div><div class="mc" style="left:1798.5px;top:641px;color:#fff;">19</div><div class="mc" style="left:1819.5px;top:641px;">20</div><div class="mc" style="left:1840.5px;top:641px;">21</div><div class="mc" style="left:1861.5px;top:641px;color:#f00;">22</div><div class="mc" style="left:1882.5px;top:641px;color:#f00;">23</div><div class="mc" style="left:1732.5px;top:662px;font-size:11px">30</div><div class="mc" style="left:1756.5px;top:662px;">24</div><div class="mc" style="left:1777.5px;top:662px;">25</div><div class="mc" style="left:1798.5px;top:662px;">26</div><div class="mc" style="left:1819.5px;top:662px;">27</div><div class="mc" style="left:1840.5px;top:662px;">28</div><div class="mc" style="left:1861.5px;top:662px;color:#f00;">29</div><div class="mc" style="left:1882.5px;top:662px;color:#f00;">30</div><div class="mc" style="left:1732.5px;top:683px;font-size:11px">31</div><div class="mc" style="left:1756.5px;top:683px;">31</div><div class="a" style="left:1733px;top:714px;width:180px;height:170px;border:1px solid #b3b7be;background:#fff"></div><div class="a" style="left:1734px;top:715px;width:178px;height:33px;background:#f4f5f7;border-bottom:1px solid #c9ccd2"></div><div class="t" style="left:1734px;top:718px;width:196px;text-align:center;font-size:10.5px;line-height:12px;color:#111;width:198px">Aug 2023</div><div class="mc" style="left:1756.5px;top:730px;font-size:10px">Mo</div><div class="mc" style="left:1777.5px;top:730px;font-size:10px">Di</div><div class="mc" style="left:1798.5px;top:730px;font-size:10px">Mi</div><div class="mc" style="left:1819.5px;top:730px;font-size:10px">Do</div><div class="mc" style="left:1840.5px;top:730px;font-size:10px">Fr</div><div class="mc" style="left:1861.5px;top:730px;font-size:10px">Sa</div><div class="mc" style="left:1882.5px;top:730px;font-size:10px">So</div><div class="a" style="left:1754px;top:748px;width:1px;height:134px;background:#b9bcc2"></div><div class="mc" style="left:1732.5px;top:748px;font-size:11px">31</div><div class="mc" style="left:1777.5px;top:748px;">1</div><div class="mc" style="left:1798.5px;top:748px;">2</div><div class="mc" style="left:1819.5px;top:748px;">3</div><div class="mc" style="left:1840.5px;top:748px;">4</div><div class="mc" style="left:1861.5px;top:748px;color:#f00;">5</div><div class="mc" style="left:1882.5px;top:748px;color:#f00;">6</div><div class="mc" style="left:1732.5px;top:769px;font-size:11px">32</div><div class="mc" style="left:1756.5px;top:769px;">7</div><div class="mc" style="left:1777.5px;top:769px;">8</div><div class="mc" style="left:1798.5px;top:769px;">9</div><div class="mc" style="left:1819.5px;top:769px;">10</div><div class="mc" style="left:1840.5px;top:769px;">11</div><div class="mc" style="left:1861.5px;top:769px;color:#f00;">12</div><div class="mc" style="left:1882.5px;top:769px;color:#f00;">13</div><div class="mc" style="left:1732.5px;top:790px;font-size:11px">33</div><div class="mc" style="left:1756.5px;top:790px;">14</div><div class="mc" style="left:1777.5px;top:790px;">15</div><div class="mc" style="left:1798.5px;top:790px;">16</div><div class="mc" style="left:1819.5px;top:790px;">17</div><div class="mc" style="left:1840.5px;top:790px;">18</div><div class="mc" style="left:1861.5px;top:790px;color:#f00;">19</div><div class="mc" style="left:1882.5px;top:790px;color:#f00;">20</div><div class="mc" style="left:1732.5px;top:811px;font-size:11px">34</div><div class="mc" style="left:1756.5px;top:811px;">21</div><div class="mc" style="left:1777.5px;top:811px;">22</div><div class="mc" style="left:1798.5px;top:811px;">23</div><div class="mc" style="left:1819.5px;top:811px;">24</div><div class="mc" style="left:1840.5px;top:811px;">25</div><div class="mc" style="left:1861.5px;top:811px;color:#f00;">26</div><div class="mc" style="left:1882.5px;top:811px;color:#f00;">27</div><div class="mc" style="left:1732.5px;top:832px;font-size:11px">35</div><div class="mc" style="left:1756.5px;top:832px;">28</div><div class="mc" style="left:1777.5px;top:832px;">29</div><div class="mc" style="left:1798.5px;top:832px;">30</div><div class="mc" style="left:1819.5px;top:832px;">31</div><div class="mc" style="left:1732.5px;top:853px;font-size:11px">36</div><svg class="a" style="left:1757px;top:206px" width="18" height="14" viewBox="0 0 18 14" fill="none" stroke="#222" stroke-width="1.5"><path d="M17 7H2M7.5 1.5L2 7l5.5 5.5"/></svg><svg class="a" style="left:1891px;top:206px" width="18" height="14" viewBox="0 0 18 14" fill="none" stroke="#222" stroke-width="1.5"><path d="M1 7h15M10.5 1.5L16 7l-5.5 5.5"/></svg><div class="a" style="left:1732px;top:893px;width:184px;height:35px;border:1px solid #b9c0c7;border-radius:3px;background:linear-gradient(#eceff2,#d6dbdf)"></div><svg class="a" style="left:1754px;top:898px" width="26" height="26" viewBox="0 0 26 26"><rect x="1.500" y="4.500" width="23" height="20" rx="1" fill="#f2f2f2" stroke="#7c7c7c" stroke-width="1.300"/><rect x="1" y="4" width="24" height="6" fill="#3d74b7"/><rect x="5" y="1" width="1.800" height="5" fill="#e0e0e0" stroke="#777" stroke-width=".7"/><rect x="19" y="1" width="1.800" height="5" fill="#e0e0e0" stroke="#777" stroke-width=".7"/><rect x="5.500" y="17" width="15.500" height="4.500" fill="#fff" stroke="#888"/><rect x="10.500" y="12.500" width="10.500" height="4.500" fill="#fff" stroke="#888"/><path d="M10.500 17v4.500M15.700 12.500v9" stroke="#888"/><rect x="10.500" y="12.500" width="5.200" height="4.500" fill="#c9dcf2" stroke="#3d74b7" stroke-width="1.200"/></svg><div class="t dv" style="left:1786px;top:903px;font-size:13px;line-height:15px;color:#111">Heute anzeigen</div>
<div class="a" style="left:0;top:34px;width:1px;height:999px;background:#9aa0a8"></div>
<div class="a" style="left:0;top:0;width:1px;height:34px;background:#1f3157"></div>
<div class="a" style="left:0;top:1031px;width:1921px;height:2px;background:#3a3d42"></div>
</body></html>
